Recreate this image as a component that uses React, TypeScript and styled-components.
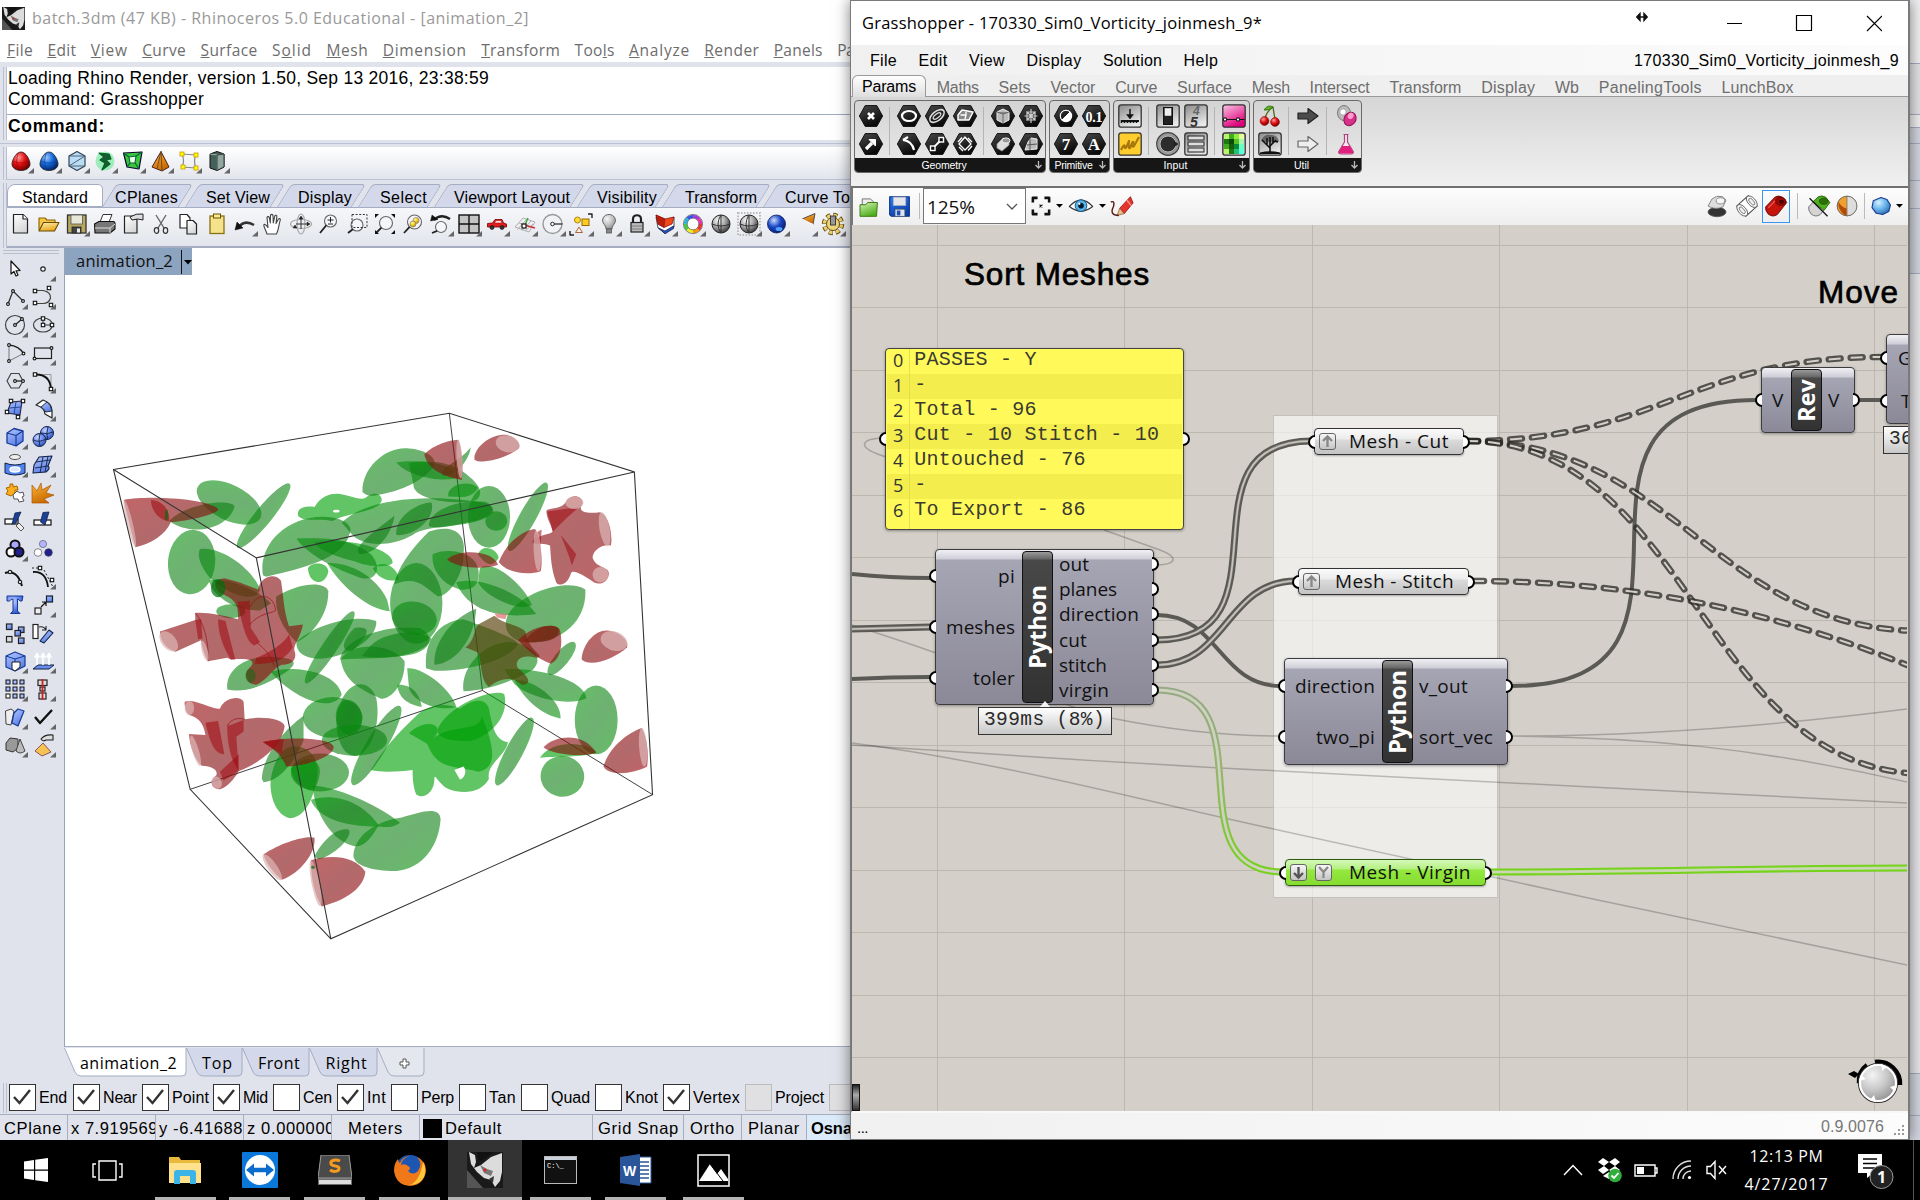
import React, { useLayoutEffect, useRef, useState } from "react";
import styled, { createGlobalStyle, css } from "styled-components";

const SANS = '"Liberation Sans", Arial, sans-serif';
const UI = '"Open Sans", "Noto Sans", sans-serif';
const MONO = '"Liberation Mono", "Courier New", monospace';

const GlobalStyle = createGlobalStyle`
  *, *::before, *::after { box-sizing: border-box; }
  body { margin: 0; background: #000; overflow: hidden; }
  svg { display: block; flex: none; }
`;

/* ---------- text that spreads its letters over a given width ---------- */

const Label = styled.span<{ $size: number; $font: string; $color: string; $bold?: boolean }>`
  display: inline-block;
  flex: none;
  white-space: pre;
  line-height: 1;
  font-family: ${(p) => p.$font};
  font-size: ${(p) => p.$size}px;
  font-weight: ${(p) => (p.$bold ? 700 : 400)};
  color: ${(p) => p.$color};
`;

type FitProps = { text: string; w?: number; size?: number; font?: string; color?: string; bold?: boolean; mnemonic?: number };

function Fit({ text, w, size = 16, font = SANS, color = "#000", bold, mnemonic }: FitProps) {
  const ref = useRef<HTMLSpanElement>(null);
  const [spacing, setSpacing] = useState(0);
  useLayoutEffect(() => {
    if (ref.current && w) setSpacing((w - ref.current.getBoundingClientRect().width) / text.length);
  }, []);
  return (
    <Label ref={ref} $size={size} $font={font} $color={color} $bold={bold} style={{ letterSpacing: spacing }}>
      {mnemonic === undefined ? text : (
        <>{mnemonic > 0 && text.slice(0, mnemonic)}<u>{text[mnemonic]}</u>{text.slice(mnemonic + 1)}</>
      )}
    </Label>
  );
}

/* ---------- drawing helpers ---------- */

const p = (d: string, fill = "none", stroke = "#222", w = 1.2) => (
  <path d={d} fill={fill} stroke={stroke} strokeWidth={w} strokeLinejoin="round" />
);
const c = (x: number, y: number, r: number, fill = "none", stroke = "#222", w = 1.2) => (
  <circle cx={x} cy={y} r={r} fill={fill} stroke={stroke} strokeWidth={w} />
);
const e = (x: number, y: number, rx: number, ry: number, fill = "none", stroke = "#222", w = 1.2) => (
  <ellipse cx={x} cy={y} rx={rx} ry={ry} fill={fill} stroke={stroke} strokeWidth={w} />
);
const r = (x: number, y: number, w: number, h: number, fill = "none", stroke = "#222", sw = 1.2) => (
  <rect x={x} y={y} width={w} height={h} fill={fill} stroke={stroke} strokeWidth={sw} />
);

function Glyph({ children, corner, size = 28 }: { children?: React.ReactNode; corner?: boolean; size?: number }) {
  return (
    <svg width={size} height={size} viewBox="0 0 28 28">
      {children}
      {corner && <path d="M27 21V26.5H21Z" fill="#666" />}
    </svg>
  );
}

const Defs = styled.svg`
  position: absolute;
  width: 0;
  height: 0;
`;

const Gradients = () => (
  <Defs>
    <defs>
      {[
        ["red", "#ff9a9a", "#e01010", "#6a0000"],
        ["blue", "#9cc8ff", "#1266d8", "#04205f"],
        ["ball", "#c8dcff", "#1a46c4", "#061a66"],
        ["grey", "#ffffff", "#a8a8a8", "#333333"],
        ["yel", "#fff6b0", "#f0d020", "#b08a00"],
        ["sky", "#d6f0ff", "#6cb8ee", "#2a6bb0"],
        ["dial", "#f4f4f4", "#c8c8c8", "#8c8c8c"],
        ["peri", "#c6d2ff", "#6f8ff0", "#2a4fc0"],
      ].map(([id, a, b, d]) => (
        <radialGradient key={id} id={id} cx=".36" cy=".3" r=".75">
          <stop offset="0" stopColor={a} />
          <stop offset=".5" stopColor={b} />
          <stop offset="1" stopColor={d} />
        </radialGradient>
      ))}
      {[
        ["folder", "#fff2b8", "#e8a81c"],
        ["orange", "#ffb43a", "#c76a00"],
        ["paper", "#ffffff", "#d8d8d8"],
        ["steel", "#4a4a4a", "#080808"],
        ["tile", "#8a8a8a", "#e8e8e8"],
        ["pblue", "#b4c6ff", "#5b7fe4"],
        ["lime", "#d4f5b8", "#4fae1c"],
        ["save", "#2a7cf0", "#0a3fae"],
        ["pink", "#f8c6e4", "#e0007a"],
      ].map(([id, a, b]) => (
        <linearGradient key={id} id={id} x1="0" y1="0" x2="0.5" y2="1">
          <stop offset="0" stopColor={a} />
          <stop offset="1" stopColor={b} />
        </linearGradient>
      ))}
      <linearGradient id="leaf" x1="0" y1="0" x2="1" y2="1">
        <stop offset="0" stopColor="rgb(0,148,6)" />
        <stop offset=".5" stopColor="rgb(14,124,20)" />
        <stop offset="1" stopColor="rgb(0,144,4)" />
      </linearGradient>
      <linearGradient id="meat" x1="0" y1="0" x2="1" y2="1">
        <stop offset="0" stopColor="rgb(156,8,12)" />
        <stop offset=".5" stopColor="rgb(130,14,16)" />
        <stop offset="1" stopColor="rgb(154,4,10)" />
      </linearGradient>
      <linearGradient id="wireFade" x1="0" y1="0" x2="0" y2="1">
        <stop offset="0" stopColor="#98a888" />
        <stop offset=".45" stopColor="#94b56c" />
        <stop offset="1" stopColor="#76d21c" />
      </linearGradient>
    </defs>
  </Defs>
);

/* ---------- Rhino icons ---------- */

const egg = (fill: string) => p("M14 5C19 5 23 13 23 17C23 21 19 23.5 14 23.5S5 21 5 17C5 13 9 5 14 5Z", fill, "#222", 0.8);
const renderIcons: React.ReactNode[] = [
  <>{egg("url(#red)")}{p("M6 14Q14 18 22 14M11 6Q8 14 11 23", "none", "#a00", 0.6)}</>,
  <>{egg("url(#blue)")}{p("M6 14Q14 18 22 14M11 6Q8 14 11 23", "none", "#0a3c90", 0.6)}</>,
  <>{p("M14 4.5L22 9V19L14 23.5L6 19V9Z", "#b8dcf4", "#345", 1.2)}{p("M6 9H22M6 19H22M6 19L22 9", "none", "#456", 0.9)}</>,
  <><circle cx="14" cy="14" r="9.5" fill="#5be88a" opacity=".55" />{p("M8 6L18 7L20 12L15 13L19 17L11 23L14 16L9 13L13 10Z", "#1b5a35", "#062", 1.2)}</>,
  <>{p("M4.5 6L23 5L20 22L8 20Z", "#39c53c", "#103", 1.2)}{p("M10 10L17 9L16 16L11 16Z", "#e8ffe8", "#063", 1.1)}{p("M4.5 6L10 10M23 5L17 9M20 22L16 16M8 20L11 16", "none", "#063")}</>,
  <>{p("M14 4.5L22 20L15 24L5 20Z", "url(#orange)", "#422", 1)}{p("M14 4.5L15 24M14 4.5L10 22", "none", "#642", 0.9)}</>,
  <>{p("M7 7L21 8Q18 14 21 21L7 20Q10 14 7 7Z", "none", "#888", 1.2)}{r(5, 5, 4, 4, "#ff0", "#c90", 0.8)}{r(19, 6, 4, 4, "#ff0", "#c90", 0.8)}{r(19, 19, 4, 4, "#ff0", "#c90", 0.8)}{r(6, 18, 4, 4, "#ff0", "#c90", 0.8)}</>,
  <>{p("M7 7L14 4.5L21 7V20L14 23.5L7 21Z", "#456058", "#111", 1)}{p("M14 8V23.5M7 7L14 8L21 7", "none", "#9cb4ac", 1)}{p("M14 8L21 7V20L14 23.5Z", "#8fa8a0", "#222", 0.8)}</>,
];

const magnifier = (x: number, y: number, rad: number) => (
  <>{c(x, y, rad, "#f4f6fa", "#666", 1.1)}{p(`M${x - rad * 0.7} ${y + rad * 0.7}L5 23`, "none", "#222", 1.8)}</>
);
const globe = (
  <>{c(14, 14, 9, "url(#grey)", "#222", 1)}{p("M5 14Q14 18 23 14M14 5V23M14 5Q8 14 14 23", "none", "#333", 1)}</>
);

const standardIcons: [React.ReactNode, boolean?][] = [
  [<>{p("M6.5 4.5H16L20.5 9V23H6.5Z", "url(#paper)", "#222", 1.2)}{p("M16 4.5V9H20.5", "#fff")}</>],
  [<>{p("M4 20V8H10L12 10H20V13", "#f4c64a", "#8a6200", 1.1)}{p("M4 21L8.5 12.5H24L19.5 21Z", "url(#folder)", "#6a4a00", 1.1)}</>],
  [<>{r(4.5, 5, 18.5, 18, "#b8a860", "#333", 1.3)}{r(8, 5, 11.5, 9, "#e8e8d8", "#555", 0.8)}{r(9, 17, 9, 6, "#444", "#222", 0.8)}{r(14, 18.5, 3, 4, "#eee", "none", 0)}</>, true],
  [<>{p("M9 12L12 4.5H21L18 12Z", "#fff", "#333", 1)}{p("M3.5 14L8 11.5H23L24 13V19L19 23H4Z", "#777", "#111", 1.1)}{p("M4 18H19L24 14M19 18V23", "none", "#ddd", 1)}</>],
  [<>{p("M5.5 6H14L18 10V23H5.5Z", "url(#paper)", "#222", 1.2)}{p("M11 7Q17 3 24 4V10Q19 8 13 10Z", "#ddd", "#222", 1)}</>],
  [<>{p("M9 5L17 18M19 5L11 18", "none", "#666", 1.4)}{e(9.5, 20.5, 2.2, 2.8, "none", "#333")}{e(18.5, 20.5, 2.2, 2.8, "none", "#333")}</>],
  [<>{p("M5 4.5H12L15 8V18H5Z", "#fff", "#222", 1.2)}{p("M12 10.5H18L21.5 14V24H12Z", "url(#paper)", "#222", 1.2)}</>],
  [<>{r(7, 6, 14, 17.5, "#f4e28c", "#8a7010", 1.3)}{r(10.5, 4, 7, 4, "#ffe890", "#665500", 1)}</>],
  [<>{p("M7 18Q13 9 23 15", "none", "#333", 2.6)}{p("M4 20L6 12L12 18Z", "#111", "#111", 0.5)}</>, true],
  [<>{p("M8 24C7 20 4 16 5 14.5C6.5 13.5 8.5 17 9 17.5L8 7.5C8.5 6 10 6.5 10.4 8L11.3 13L11.5 5.5C12 4 13.8 4 14 5.6L14.3 13L15.8 6C16.4 4.6 18 5.2 17.8 7L17 13.5L19.5 9C20.4 8 21.8 9 21.2 10.4C19.6 15 20 19 17.5 24Z", "#fff", "#444", 1.1)}</>],
  [<>{e(14, 14, 10.5, 4.5, "none", "#aaa", 1.2)}{e(14, 14, 4, 10, "none", "#aaa", 1.2)}{p("M14 9V19M9 14H21", "none", "#333", 1)}{p("M12 9L14 6L16 9ZM20 12L23 14L20 16ZM8 15L6 18L10 18Z", "#222", "#222", 0.5)}</>],
  [<>{magnifier(15.5, 11, 6)}{p("M12.5 10H18.5M15.5 7V12.5M13 14H18", "none", "#222", 1)}</>],
  [<>{magnifier(14, 15, 6)}<rect x="9" y="4.5" width="15" height="13" fill="none" stroke="#333" strokeDasharray="2 1.6" /></>],
  [<>{magnifier(15, 13, 6.5)}{p("M4 4H8L4 8ZM24 4H20L24 8ZM4 24V20L8 24ZM24 24H20L24 20Z", "#111", "none", 0)}</>],
  [<>{magnifier(15.5, 12, 7)}{c(17, 10.5, 3, "url(#yel)", "#987", 0.8)}{c(14, 14, 3, "url(#yel)", "#987", 0.8)}</>],
  [<>{magnifier(14, 17, 5.5)}{p("M7 10Q14 3 23 9", "none", "#222", 2.4)}{p("M3.5 11L5 5L11 9.5Z", "#111", "#111", 0.4)}</>, true],
  [<>{r(4, 5, 20, 18, "#c4c4c4", "#111", 1.4)}{p("M14 5V23M4 14H24", "none", "#111", 1.4)}</>, true],
  [<>{p("M4.5 17V13.5L9.5 13L12 9.5H19L20.5 13L23.5 14V17Z", "#e02020", "#700", 0.8)}{p("M13 10.5H18L19 13H11.5Z", "#fdd", "#a00", 0.5)}{c(9, 17.5, 2, "#333", "#111", 0.6)}{c(19, 17.5, 2, "#333", "#111", 0.6)}</>, true],
  [<>{p("M4 17L12 8L24 12L18 22ZM8 13L21 17M6.5 19.5L16 8.8M11 20.5L20 11M14 21L22 14", "none", "#b0b0b0", 1)}{p("M13 15L24 18", "none", "#c33", 1.4)}{p("M14 15L17 8", "none", "#3a3", 1.4)}{r(11, 14, 4, 4, "#fff", "#111", 1.2)}</>, true],
  [<>{c(13.5, 14, 9.5, "#f0f2f6", "#999", 1.4)}{p("M13.5 14H23.5", "none", "#222", 1.2)}{c(13.5, 14, 1.8, "#fff", "#222", 1)}</>, true],
  [<>{c(10.5, 10, 3, "#fd3", "#a70", 0.9)}{r(15, 9, 7, 6.5, "#fc2", "#960", 1)}{p("M12 17L15.5 22.5H8.5Z", "#fed", "#a64", 1)}{p("M21 4H25V8M3 21V25H7", "none", "#222", 1.4)}</>, true],
  [<>{p("M14 4.5C19 4.5 21.5 9 20 12.5C18.5 15 17 16.5 17 19H11C11 16.5 9.5 15 8 12.5C6.5 9 9 4.5 14 4.5Z", "url(#dial)", "#666", 1)}{r(11.5, 19, 5, 4, "#888", "#555", 0.8)}</>, true],
  [<>{p("M10 13V9C10 4 18 4 18 9V13", "none", "#222", 2.2)}{r(8, 12.5, 12, 9.5, "#bbb", "#222", 1.2)}{p("M9 16H19M9 19H19", "none", "#777", 0.9)}</>, true],
  [<>{p("M5 7L14 12L23 7V17L14 23L7 18Z", "#fff", "#345", 0.9)}{p("M5 5L14 9L23 7L21 14L13 17.5L7 14Z", "#f04a1c", "#811", 0.8)}{p("M5 5L14 9L13 17.5L7 14Z", "#b8200c", "#811", 0.5)}{p("M7.5 18L14 21L22.5 16V18.5L14 23.8Z", "#2a52c8", "#124", 0.8)}</>, true],
  [<>
    {["#e33", "#f90", "#ee2", "#4c4", "#2bd", "#35e", "#a3d", "#e3a"].map((col, i) => (
      <circle key={col} cx="14" cy="14" r="7.6" fill="none" stroke={col} strokeWidth="3.4" strokeDasharray="6.1 41.7" strokeDashoffset={-i * 5.97} />
    ))}
    {c(14, 14, 9.6, "none", "#555", 0.7)}{c(14, 14, 5.8, "#fff", "#555", 0.7)}
  </>, true],
  [globe],
  [<><rect x="3" y="3" width="22" height="22" fill="none" stroke="#bbb" strokeWidth="2" strokeDasharray="1.5 1.5" />{globe}</>, true],
  [<>{c(13.5, 14, 9, "url(#ball)", "#0a1c60", 0.8)}{e(16, 19, 3.5, 2, "#4fa0ff", "none", 0)}</>, true],
  [<>{p("M11 9L24 3.5L22 14.5Z", "url(#orange)", "#444", 0.9)}{p("M11 9Q18 13 22 14.5", "none", "#fff", 1.4)}</>, true],
  [<>
    <circle cx="14" cy="14" r="8.6" fill="none" stroke="#6a5210" strokeWidth="5.2" strokeDasharray="4 2.75" />
    <circle cx="14" cy="14" r="8.4" fill="none" stroke="#e8cf70" strokeWidth="3.6" strokeDasharray="3.2 3.4" strokeDashoffset="-.4" />
    {c(14, 14, 6.5, "#ecd57c", "#6a5210", 1)}{r(11.5, 6, 5, 9, "#999", "#333", 0.9)}
  </>, true],
];

const node = (x: number, y: number) => c(x, y, 1.4, "#fff", "#111", 1.1);
const handle = (x: number, y: number) => r(x - 1.7, y - 1.7, 3.4, 3.4, "#fff", "#111", 1.1);
const B = "url(#pblue)";
const sideIcons: [React.ReactNode, boolean?][] = [
  [<>{p("M10 6L10 19L13 16.5L15 21L17 20L15 15.8L19 15.5Z", "#fff", "#111", 1.2)}</>],
  [<>{c(14, 14, 2.2, "#fff", "#222", 1.2)}</>, true],
  [<>{p("M7 21L12 8L22 18", "none", "#333", 1.3)}{node(7, 21)}{node(12, 8)}{node(22, 18)}</>, true],
  [<>{p("M6 7.5H14Q22 9 21.5 15Q20 20.5 14 20.5H6", "none", "#444", 1.2)}{handle(6, 8)}{handle(6, 20)}{handle(20, 5)}{handle(22, 22)}</>, true],
  [<>{c(14, 14, 9.5, "none", "#444", 1.2)}{p("M14 14L21 8", "none", "#222", 1.2)}{node(14, 14)}{node(21, 8)}</>, true],
  [<>{e(14, 14, 9.5, 7, "none", "#444", 1.2)}{p("M14 7V14H23", "none", "#333", 1)}{handle(14, 7.5)}{handle(14, 14)}{handle(23, 14)}</>, true],
  [<>{p("M8 6Q18 7 22.5 14.5", "none", "#222", 1.4)}{p("M8 6V22L22.5 14.5", "none", "#777", 1)}{node(8, 6)}{node(22.5, 14.5)}{node(8, 22)}</>, true],
  [<>{r(5.5, 9, 17, 10.5, "none", "#222", 1.2)}{node(22.5, 9)}{node(5.5, 19.5)}</>, true],
  [<>{p("M10 6.5H18L22 14L18 21H10L6 14Z", "none", "#444", 1.2)}{p("M14 14H22", "none", "#111", 1.2)}{node(14, 14)}{node(22, 14)}</>, true],
  [<>{p("M6 7.5H22V22", "none", "#999", 1)}{p("M6 7.5Q21 7 22 22", "none", "#111", 1.8)}{handle(6, 7.5)}{handle(22, 22)}</>, true],
  [<>{p("M10 7L21 6L19 20L6 18Z", B, "#224", 1.1)}{p("M8 13L20 12M15 7L13 19", "none", "#234a9a", 1)}{handle(10, 6)}{handle(22, 6)}{handle(6, 17)}{handle(17, 22)}</>, true],
  [<>{p("M7 10L14 5Q23 8 23 16V23L16 19Q16 13 7 10Z", "#fff", "#222", 1.2)}{p("M12 12L18 7Q22 10 23 16L17 17Q15 14 12 12Z", B, "#234", 1)}</>, true],
  [<>{p("M6 10L13 5.5L22 8V18L15 23L6 20Z", B, "#123a9a", 1.3)}{p("M6 10L15 12.5L22 8M15 12.5V23", "none", "#123a9a", 1.1)}</>, true],
  [<>{c(18, 10, 6.5, "url(#peri)", "#124", 1)}{c(10.5, 17, 6.5, "url(#peri)", "#124", 1)}{p("M4.5 17Q10 20 17 16M11 10.5Q9 17 11 23.5M12 10Q18 12 24 9M19 4Q17 10 18.5 16", "none", "#124", 0.9)}</>, true],
  [<>{e(14, 6, 5.5, 2.5, "#eee", "#555", 1)}{p("M4 12Q14 16 24 12V22Q14 26 4 22Z", "#4f82ee", "#124", 1)}{e(14, 18.5, 5, 2.6, "#dce6ff", "#fff", 1.4)}</>, true],
  [<>{p("M5 14L10 6L23 5L19 15Q22 17 17 21L4 22Z", B, "#124", 1.1)}{p("M7 11L21 9M6 17L19 15M14 6L11 22M19 5L16 21", "none", "#124", 0.9)}</>, true],
  [<>{p("M5 9L9 8V5H12V8L16 7L17 11H14V14L10 17L5 15L7 12Z", "#ffae1c", "#a60", 1)}{p("M12 16L16 12L19 14L22 13L23 17L21 18L23 22L18 23L17 20L13 20Z", "#fff", "#555", 1)}</>],
  [<>{p("M3 24L3 6L8 12L12 4L13 11L22 6L17 14L25 16L15 20L20 24Z", "url(#orange)", "#a50", 0.7)}</>],
  [<>{r(4, 12, 13, 5, "#fff", "#111", 1.2)}{p("M14 6L20 5L15 16L11 17Z", "#1c3f98", "#124", 0.8)}{p("M15 19L18 16L23 21L20 24Z", "#eee", "#555", 1)}</>],
  [<>{r(5, 13, 17, 5, "#fff", "#111", 1.2)}{p("M14 5.5L20 5L16 18L11.5 15Z", "#1c3f98", "#124", 0.8)}</>],
  [<>{c(14, 10, 4.5, "#a9a8ff", "#111", 2)}{c(10, 17, 4.5, "#fff", "#111", 2)}{c(18, 17, 4.5, "#221f88", "#111", 2)}</>, true],
  [<>{c(14, 9, 3.6, "#b6b4ff", "#667", 0.8)}{c(9, 17.5, 3.8, "#fff", "#667", 0.8)}{c(19.5, 17.5, 3.8, "#221f88", "#446", 0.8)}</>],
  [<>{p("M4 10Q16 6 21 23", "none", "#111", 2)}{c(9, 9, 1.7, "#fff")}{c(19, 19, 1.7, "#fff")}</>],
  [<><path d="M3 5H13M15 7L24 24" stroke="#222" strokeDasharray="2 2" fill="none" />{p("M4 9Q17 8 19 24", "none", "#111", 1.8)}{handle(11, 5)}{handle(23, 17)}</>, true],
  [<>{p("M6 5H22L21 10H19Q18 8 16.5 8V20L19 22.5H9.5L12 20V8Q10 8 8.5 10H6Z", "url(#peri)", "#123a9a", 1)}</>],
  [<>{r(17.5, 5, 6, 6, B, "#123", 1.2)}{r(6, 17, 6, 6, "#eee", "#222", 1.2)}{p("M12 16L17 11M13 11H17V15", "none", "#111", 1.2)}</>, true],
  [<>{r(5.5, 5, 5.5, 5.5, B)}{r(5.5, 17.5, 5.5, 5.5, "#ddd")}{r(17.5, 8, 5.5, 5.5, B)}{r(14, 11.5, 5.5, 5.5, B)}{r(17.5, 19, 5.5, 5.5, B)}</>],
  [<>{r(4, 5.5, 5, 14, "#fff", "#222", 1.2)}{p("M11 22L20 11L24 14L15 24Z", B, "#124", 1.1)}{p("M10 8Q15 7 17 11M17 7V11H13", "none", "#222", 1.1)}</>],
  [<>{p("M5 9L14 5L24 9V19L14 24L5 20Z", B, "#123a9a", 1.2)}{p("M5 9L14 12L24 9M14 12V16", "none", "#123a9a", 1)}{p("M11 15L19 15V20L14 24L11 22Z", "#fff", "#222", 1)}</>, true],
  [<>{p("M4 22L9 18H25L20 22Z", "#6a8cee", "#124", 1)}{p("M8 18V9M14 18V9M20 18V9M6 10L8 6.5L10 10ZM12 10L14 6.5L16 10ZM18 10L20 6.5L22 10Z", "#fff", "#fff", 1.6)}</>, true],
  [<>{[5, 12, 19].map((y) => [5, 12, 19].map((x) => <rect key={`${x}-${y}`} x={x} y={y} width="4" height="4" fill={x + y > 23 && x < 12 ? "#fff" : "#a9bcff"} stroke="#111" />))}</>, true],
  [<>{r(9, 5, 9, 5.5, "#ddd")}{r(11, 12, 5, 4, "#ddd")}{r(10, 18, 7, 6, "#ddd")}{p("M13.5 4V25", "none", "#c22", 1.8)}</>, true],
  [<>{p("M4.5 8L10 6L13 8L10 22L5 21Z", "#eee", "#444", 1)}{p("M13 10L17 6L23 8L17 23L11 20Z", B, "#123a9a", 1.2)}</>, true],
  [<>{p("M6 14L11 20L23 7", "none", "#111", 2.4)}</>, true],
  [<>{p("M5 12L9 7L17 8V17L12 21L5 19Z", "#999", "#333", 1)}{p("M19 8L24 20Q19 24 15 20Z", "#bbb", "#444", 1)}</>, true],
  [<>{p("M14 12L22 21L13 25L6 20Z", "#f6c352", "#855", 1)}{p("M12 8Q16 3 24 4V9L17 9Q14 11 12 8Z", "#ddd", "#222", 1.1)}</>, true],
];

/* ---------- Rhino window ---------- */

const Screen = styled.div`
  width: 1920px;
  height: 1200px;
  display: flex;
  flex-direction: column;
  overflow: hidden;
`;
const Desktop = styled.div`
  height: 1140px;
  display: flex;
`;
const Rhino = styled.div`
  width: 850px;
  height: 1140px;
  display: flex;
  flex-direction: column;
  overflow: hidden;
  background: #e0e3eb;
`;
const TitleBar = styled.div`
  height: 36px;
  flex: none;
  display: flex;
  align-items: center;
  gap: 7px;
  padding-left: 2px;
  background: #fff;
`;
const RhinoMenu = styled.div`
  height: 26px;
  flex: none;
  display: flex;
  align-items: center;
  gap: 14.4px;
  padding: 3px 0 0 7px;
  background: #fff;
`;
const grip = css`
  &::before {
    content: "";
    flex: none;
    width: 4px;
    border: 1px solid #b9bfcd;
    border-width: 0 1px;
  }
`;
const CommandDock = styled.div`
  height: 82px;
  flex: none;
  display: flex;
  padding: 5px 0 3px 3px;
  border-bottom: 1px solid #bcc3d4;
  ${grip}
`;
const CommandPane = styled.div`
  flex: 1;
  display: flex;
  flex-direction: column;
  background: #fff;
`;
const History = styled.div`
  height: 48px;
  display: flex;
  flex-direction: column;
  align-items: flex-start;
  gap: 3px;
  padding: 3px 0 0 1px;
  border-bottom: 1px solid #a0abbf;
`;
const Prompt = styled.div`
  flex: 1;
  display: flex;
  align-items: center;
  padding: 0 0 2px 1px;
`;
const Dock = styled.div<{ $h: number }>`
  height: ${(q) => q.$h}px;
  flex: none;
  display: flex;
  padding: 3px 0 0 3px;
  ${grip}
`;
const RenderBar = styled.div`
  flex: 1;
  display: flex;
  align-items: center;
  padding-bottom: 4px;
  background: linear-gradient(#fff, #e2e5ec);
  border-bottom: 1px solid #bcc3d4;
`;
const TabbedBar = styled.div`
  flex: 1;
  display: flex;
  flex-direction: column;
  padding-top: 1px;
  border-bottom: 2px solid #a5adc2;
`;
const ToolTabs = styled.div`
  height: 24px;
  flex: none;
  display: flex;
  overflow: hidden;
  border-bottom: 1px solid #a5adc2;
`;
const ToolTab = styled.div<{ $w: number; $active?: boolean; $pad: number }>`
  position: relative;
  z-index: 0;
  width: ${(q) => q.$w}px;
  flex: none;
  padding: ${(q) => (q.$active ? 4 : 5)}px 0 0 ${(q) => q.$pad}px;
  background: ${(q) => (q.$active ? "#fff" : "transparent")};
  border-radius: ${(q) => (q.$active ? "8px 5px 0 0" : "0")};
  border: ${(q) => (q.$active ? "1px solid #a5adc2" : "none")};
  ${(q) => !q.$active && css`
    &::before {
      content: "";
      position: absolute;
      z-index: -1;
      inset: 0 0 0 6px;
      background: #d3d8ea;
      border: 1px solid #a5adc2;
      border-bottom: none;
      border-radius: 4px 4px 0 0;
      transform: skewX(-32deg);
    }
  `}
`;
const ToolRow = styled.div`
  flex: 1;
  display: flex;
  align-items: flex-start;
  padding-top: 2px;
  overflow: hidden;
  background: linear-gradient(#f6f7f9, #e2e5ec);
`;
const Work = styled.div`
  height: 799px;
  flex: none;
  display: flex;
`;
const SidePanel = styled.div`
  width: 64px;
  flex: none;
  padding: 2px 5px 0 1px;
`;
const SideGrip = styled.div`
  height: 4px;
  margin: 0 0 1px 2px;
  border: 1px solid #b9bfcd;
  border-width: 1px 0;
`;
const SideGrid = styled.div`
  display: grid;
  grid-template-columns: 28px 28px;
  grid-auto-rows: 28px;
`;
const Viewport = styled.div`
  flex: 1;
  display: flex;
  flex-direction: column;
  align-items: flex-start;
  background: #fff;
  border-left: 1px solid #99a3b8;
  border-bottom: 1px solid #a5adc2;
`;
const ViewTag = styled.div`
  width: 127px;
  height: 27px;
  display: flex;
  align-items: center;
  padding-left: 11px;
  gap: 8px;
  background: #8ca4c0;
`;
const Scene = styled.div`
  padding: 125px 0 0 35px;
`;
const ViewTabs = styled.div`
  height: 34px;
  flex: none;
  display: flex;
  padding: 1px 0 0 64px;
`;
const ViewTab = styled.div<{ $w: number }>`
  width: ${(q) => q.$w}px;
  height: 29px;
  display: grid;
  > * { grid-area: 1 / 1; }
  > span { align-self: center; justify-self: center; padding: 2px 0 0 6px; }
`;
const OsnapBar = styled.div`
  height: 34px;
  flex: none;
  display: flex;
  align-items: center;
  padding-left: 3px;
  overflow: hidden;
  border-bottom: 1px solid #a5adc2;
  &::before {
    content: "";
    flex: none;
    width: 4px;
    height: 30px;
    margin-right: 2px;
    border: 1px solid #b9bfcd;
    border-width: 0 1px;
  }
`;
const Osnap = styled.div<{ $w: number }>`
  width: ${(q) => q.$w}px;
  flex: none;
  display: flex;
  align-items: center;
  gap: 3px;
`;
const Box = styled.div<{ $off?: boolean }>`
  width: 27px;
  height: 27px;
  flex: none;
  border: ${(q) => (q.$off ? "1px solid #bbb" : "1.5px solid #333")};
  background: ${(q) => (q.$off ? "#e0e0e2" : "#fff")};
`;
const StatusBar = styled.div`
  flex: 1;
  display: flex;
`;
const StatusCell = styled.div<{ $w: number; $pad: number; $on?: boolean }>`
  width: ${(q) => q.$w}px;
  flex: none;
  display: flex;
  align-items: center;
  gap: 3px;
  overflow: hidden;
  padding: 2px 0 0 ${(q) => q.$pad}px;
  border-right: 1px solid #a5adc2;
  background: ${(q) => (q.$on ? "#dcebf9" : "transparent")};
`;
const Swatch = styled.div`
  width: 19px;
  height: 19px;
  background: #000;
`;

const menuItems: [string, number, number][] = [
  ["File", 26, 0], ["Edit", 29, 0], ["View", 37, 0], ["Curve", 44, 0], ["Surface", 57, 0], ["Solid", 40, 1], ["Mesh", 42, 0],
  ["Dimension", 84, 0], ["Transform", 79, 0], ["Tools", 40, 3], ["Analyze", 61, 0], ["Render", 55, 0], ["Panels", 49, 0], ["Pa", 17, 9],
];
const toolTabs: [string, number, number, number][] = [
  ["Standard", 96, 66, 14], ["CPlanes", 83, 63, 12], ["Set View", 92, 64, 20], ["Display", 81, 54, 20], ["Select", 76, 47, 21],
  ["Viewport Layout", 143, 116, 19], ["Visibility", 85, 60, 19], ["Transform", 101, 72, 22], ["Curve To", 120, 65, 21],
];
const osnaps: [string, number, number, boolean, boolean?][] = [
  ["End", 64, 28, true], ["Near", 69, 34, true], ["Point", 71, 37, true], ["Mid", 60, 25, true], ["Cen", 64, 29, false], ["Int", 54, 19, true],
  ["Perp", 68, 33, false], ["Tan", 62, 27, false], ["Quad", 74, 39, false], ["Knot", 68, 33, false], ["Vertex", 82, 47, true], ["Project", 84, 49, false, true], ["", 84, 0, false, true],
];

/* closed outlines of the simulated bodies */
const greens = [
  "M722 262C720 190 790 130 850 138C900 142 925 165 920 185C905 215 850 250 800 262C760 272 740 280 722 262Z",
  "M850 180C900 170 960 175 1000 205C1040 235 1060 265 1035 285C1000 300 860 290 862 240Z",
  "M815 178C870 168 985 180 985 222C940 235 850 220 815 178Z",
  "M1020 135C1015 175 975 222 942 215C935 190 985 180 1020 135Z",
  "M190 345C240 290 370 280 370 305C350 370 250 390 190 345Z",
  "M275 425C330 415 420 480 440 540C430 590 320 540 290 490C272 460 268 440 275 425Z",
  "M300 515C330 500 440 540 470 580L440 600C370 600 310 560 300 515Z",
  "M447 490C440 400 530 320 640 335C690 345 695 370 685 385C670 450 560 480 460 503C450 503 447 500 447 490Z",
  "M540 395C640 390 700 400 745 440C780 480 760 530 700 500C640 480 560 430 540 395Z",
  "M625 465C680 460 760 500 790 570L797 602C740 600 660 530 625 465Z",
  "M665 350C720 290 860 270 1000 285C1060 290 1085 300 1082 320C1040 370 900 350 860 385C800 420 720 420 690 380Z",
  "M815 385C810 330 880 290 912 292C925 340 860 390 815 385Z",
  "M905 360C900 320 980 280 1060 290C1095 305 1080 330 1030 345C980 355 940 370 905 360Z",
  "M810 330C805 380 760 440 715 440C690 420 760 370 810 330Z",
  "M905 375C960 355 1010 370 1000 440C1000 500 960 560 930 560C890 530 870 500 810 525C820 470 870 410 905 375Z",
  "M915 440C950 420 1030 430 1040 480C1050 530 1020 545 990 540C950 530 910 490 915 440Z",
  "M1045 480C1080 450 1170 530 1188 585C1150 605 1060 560 1040 520Z",
  "M980 520C1040 500 1160 550 1200 610C1100 625 1010 600 980 520Z",
  "M1130 600C1180 540 1290 510 1335 540C1340 620 1280 690 1180 692C1120 690 1100 640 1130 600Z",
  "M485 560C560 515 620 520 628 545C630 620 570 680 540 690C500 650 480 600 485 560Z",
  "M540 690C590 640 700 610 760 630C765 680 680 735 600 738C560 735 540 720 540 690Z",
  "M660 740C670 680 780 640 880 650C920 670 915 710 860 725C790 740 720 735 660 740Z",
  "M662 740C690 690 800 690 838 745C840 820 790 860 770 850C700 820 670 790 662 740Z",
  "M745 700C780 660 880 650 912 680C900 720 800 745 720 730Z",
  "M897 765C890 690 930 630 1000 625C1040 640 1150 680 1150 695C1130 740 1010 775 920 772Z",
  "M920 755C915 690 970 620 1035 595C1030 680 980 750 920 755Z",
  "M350 825C345 770 400 720 500 735C550 740 540 760 490 790C440 820 390 835 350 825Z",
  "M470 775C520 755 650 770 665 840C630 900 520 840 470 775Z",
  "M1000 830C990 770 1050 690 1130 690C1200 700 1220 740 1190 770C1140 800 1060 830 1000 830Z",
  "M1112 768C1180 760 1330 790 1338 850C1290 875 1180 850 1140 810Z",
  "M1140 800C1180 790 1270 850 1267 908C1220 900 1170 860 1140 800Z",
  "M845 765C890 760 970 830 980 875C930 890 860 860 850 820Z",
  "M818 812C860 810 880 840 885 875C850 870 820 850 818 812Z",
  "M660 870C680 800 740 790 760 850C775 930 740 1015 700 1015C650 1010 640 900 660 870Z",
  "M585 1100C640 1100 760 1150 825 1205C800 1225 770 1215 765 1215C740 1260 720 1275 700 1272C640 1260 590 1180 585 1100Z",
  "M580 1140C640 1120 720 1140 768 1215C700 1220 600 1200 580 1140Z",
  "M697 1300C700 1240 760 1200 830 1190C880 1175 935 1155 937 1195C930 1290 870 1345 800 1343C740 1340 700 1325 697 1300Z",
  "M590 1300C610 1260 650 1215 685 1225C695 1250 640 1300 600 1310Z",
  "M445 1080C450 1000 520 930 560 900L560 970C540 1020 500 1085 450 1090Z",
  "M695 715C720 690 765 640 700 650C670 680 655 720 695 715Z",
];
const greenOvals: number[][] = [
  [1070, 333, 58, 88, 0], [1177, 333, 110, 23, -62], [355, 292, 97, 50, 28], [450, 330, 116, 24, -52], [252, 462, 65, 92, 5],
  [870, 580, 72, 115, 0], [865, 622, 62, 47, 12], [632, 705, 122, 21, -57], [1270, 737, 58, 20, -52], [1365, 912, 59, 98, 0],
  [640, 905, 82, 58, 0], [760, 985, 130, 28, -60], [1140, 1002, 108, 24, -63], [605, 1062, 80, 54, 0], [1272, 1073, 60, 58, 10],
  [685, 905, 36, 50, -8], [360, 602, 40, 20, 0], [700, 970, 90, 44, 0], [1090, 345, 30, 28, 0],
];
const brights = [
  "M545 330C540 310 560 300 590 305C610 270 640 265 660 268C700 275 720 290 735 275C750 262 775 265 775 285C770 320 680 320 640 345C600 335 560 350 545 330Z",
  "M590 405C700 390 810 430 805 465C790 480 730 475 700 460C660 450 600 430 590 405Z",
  "M750 480C780 450 820 480 822 510C800 520 770 515 750 480Z",
  "M572 480C580 460 628 460 628 490C620 530 575 530 572 480Z",
  "M958 265C970 235 1020 230 1040 250C1020 285 990 275 958 275Z",
  "M1040 440C1050 410 1090 420 1097 450C1080 480 1060 470 1040 440Z",
  "M930 935C960 870 1080 820 1112 838C1125 890 1090 950 1020 972C960 975 920 960 930 935Z",
  "M745 1055C780 990 840 930 870 900C900 870 950 860 990 880C1030 850 1060 850 1070 880C1080 940 1090 970 1122 975C1120 1010 1060 1040 1070 1080C1050 1120 1000 1125 960 1110C930 1095 920 1060 920 1080C920 1120 890 1140 870 1125C860 1100 860 1070 860 1055C820 1060 770 1062 745 1055Z",
  "M850 950C900 900 960 930 910 970C960 920 1050 950 1050 900C1090 1000 1090 1050 1040 1060C980 1040 930 1060 900 980Z",
  "M530 988C590 985 610 1040 592 1100C580 1160 550 1195 520 1192C480 1180 465 1120 470 1080C478 1030 500 990 530 988Z",
  "M525 1050C560 1010 605 1020 605 1060C600 1100 590 1115 575 1112C545 1100 530 1080 525 1050Z",
  "M1210 1020C1250 960 1350 980 1367 1005C1330 1020 1250 1015 1210 1020Z",
];
const reds = [
  "M65 285C130 272 290 280 325 310C330 325 240 345 195 348C180 385 140 410 97 420Z",
  "M892 155C920 125 960 115 985 113C995 130 1000 200 995 228C950 220 900 200 892 155Z",
  "M1030 160C1040 120 1090 95 1120 100C1150 110 1160 130 1150 140C1120 165 1050 185 1030 170Z",
  "M1228 315C1240 305 1270 315 1285 285C1300 265 1330 275 1328 295C1310 320 1340 325 1375 320C1400 325 1412 390 1405 415C1380 410 1355 430 1355 450C1365 480 1400 475 1400 495C1398 520 1375 528 1360 520C1330 500 1300 480 1295 495C1285 530 1260 530 1255 520C1240 480 1240 440 1238 415C1215 405 1190 415 1190 405C1210 380 1240 385 1245 375C1240 350 1228 340 1228 315Z",
  "M1097 462C1120 400 1170 370 1197 368C1215 400 1218 470 1212 488C1180 500 1120 495 1097 462Z",
  "M165 660L262 627L262 607C300 605 340 615 380 625C380 590 380 570 330 550C300 520 330 505 350 510C390 520 420 535 435 540C440 505 480 490 498 515C505 560 505 600 520 645L558 640C555 670 530 700 535 715C545 745 520 755 500 755C480 760 460 800 430 812C400 810 395 780 410 765C430 745 420 735 360 740L350 735L297 745C285 720 280 700 278 685L208 718C185 710 165 690 165 660Z",
  "M233 860C260 850 300 880 330 880C340 850 385 840 395 860L398 910C450 900 505 910 508 930C500 990 430 1040 382 1058C370 1080 350 1105 330 1110C310 1110 295 1090 320 1070C325 1055 310 1045 280 1043C255 1020 245 970 245 952L290 955C285 920 270 905 245 898C235 890 232 870 233 860Z",
  "M448 975C500 960 640 960 643 990C640 1020 560 1045 512 1045C500 1010 470 990 448 975Z",
  "M450 1295C500 1260 570 1240 590 1248C595 1290 550 1350 500 1368C480 1350 455 1320 450 1295Z",
  "M580 1312C640 1295 700 1300 730 1345C725 1400 660 1430 610 1444C590 1410 580 1360 580 1312Z",
  "M1385 1045C1400 990 1450 950 1490 935C1505 960 1510 1010 1505 1045C1470 1065 1400 1075 1385 1045Z",
  "M1325 735C1330 690 1365 655 1395 657C1430 660 1455 685 1450 705C1420 735 1350 765 1325 740Z",
  "M1220 990C1250 955 1330 945 1365 1005C1330 1020 1240 1010 1220 990Z",
  "M1150 685C1190 640 1255 635 1265 655C1275 700 1265 740 1240 752C1210 740 1180 720 1150 685Z",
  "M955 455C980 425 1080 425 1095 470C1060 485 980 480 955 455Z",
];
/* deeper red folds where two walls of a body overlap */
const redFolds = [
  "M140 285C165 284 195 310 190 346C160 342 140 312 140 285Z",
  "M1230 318L1318 305L1285 335L1246 375Z",
  "M1268 385L1310 440L1298 472C1290 440 1280 420 1268 385Z",
  "M1190 405C1194 385 1205 372 1215 370L1212 412Z",
  "M262 627L278 625L282 680L270 682Z",
  "M325 625L345 630L372 740L360 740C335 700 325 660 325 625Z",
  "M378 575L412 572L415 650L440 690L425 700C400 690 390 630 378 575Z",
  "M430 735C470 720 510 690 520 668L530 705C510 740 480 755 425 752Z",
  "M350 930L395 912L395 945L375 960L382 1056C360 1030 350 980 350 930Z",
  "M290 920L325 915L342 1010C310 1010 300 960 290 920Z",
  "M330 1060L382 1010L380 1058L340 1085Z",
  "M448 975L505 966L500 1010Z",
];
const caps: number[][] = [
  [82, 352, 8, 68, -13], [989, 168, 8, 55, -4], [1121, 125, 33, 24, 15], [1305, 293, 25, 18, 0], [1388, 368, 14, 49, -10], [1377, 498, 22, 22, 0],
  [1203, 430, 10, 58, -3], [189, 688, 33, 20, 52], [246, 878, 13, 20, 0], [321, 1091, 14, 18, -20], [474, 1332, 44, 13, 56], [593, 1378, 11, 66, -11],
  [1494, 990, 11, 55, -4], [1414, 687, 38, 27, 20], [263, 1000, 9, 45, -16], [288, 715, 8, 30, -15],
];
const olives = [
  "M1005 705C1030 690 1030 650 1040 640L1085 615C1110 640 1150 640 1170 660C1180 720 1230 730 1200 735C1150 720 1140 750 1150 765C1180 790 1190 810 1160 812C1130 780 1090 800 1070 818C1045 800 1050 740 1040 720Z",
  "M1170 685C1200 640 1255 635 1262 655C1262 690 1220 690 1170 690Z",
];

function VorticityScene() {
  return (
    <svg width="570" height="550" viewBox="0 0 1568 1568" preserveAspectRatio="none">
      <g stroke="#333" strokeWidth="2.6" fill="none">
        <path d="M961 38L1052 828L248 1110M1052 828L1520 1125" />
      </g>
      <g fill="rgb(0,160,6)" fillOpacity=".62">{brights.map((d) => <path key={d} d={d} />)}</g>
      <g fill="url(#leaf)" fillOpacity=".6">
        {greens.map((d) => <path key={d} d={d} />)}
        {greenOvals.map(([x, y, rx, ry, a], i) => <ellipse key={i} cx={x} cy={y} rx={rx} ry={ry} transform={`rotate(${a} ${x} ${y})`} />)}
      </g>
      <g fill="#fff"><path d="M975 1055L1000 1045C1012 1060 1000 1080 990 1082Z" /><ellipse cx="650" cy="317" rx="9" ry="4" /></g>
      <g fill="rgb(86,62,8)" fillOpacity=".66">{olives.map((d) => <path key={d} d={d} />)}</g>
      <g fill="url(#meat)" fillOpacity=".62">{reds.map((d) => <path key={d} d={d} />)}</g>
      <g fill="rgb(158,8,14)" fillOpacity=".55">{redFolds.map((d) => <path key={d} d={d} />)}</g>
      <g fill="none" stroke="rgb(150,10,14)" strokeOpacity=".7" strokeWidth="2.5">
        <path d="M412 590C440 540 480 560 483 600C470 610 440 606 412 640M262 607C290 640 300 700 297 745M480 760C470 720 440 700 430 690M350 930C360 905 390 905 398 912" />
      </g>
      <g fill="#dcb4b4" fillOpacity=".72">
        {caps.map(([x, y, rx, ry, a], i) => <ellipse key={i} cx={x} cy={y} rx={rx} ry={ry} transform={`rotate(${a} ${x} ${y})`} />)}
        <path d="M1085 608L1120 610L1115 625L1092 620Z" fill="#e07070" />
      </g>
      <g fill="rgb(0,110,10)" fillOpacity=".7">
        <ellipse cx="325" cy="536" rx="20" ry="26" /><ellipse cx="414" cy="786" rx="14" ry="20" fillOpacity=".45" />
        <ellipse cx="183" cy="328" rx="4" ry="16" /><circle cx="586" cy="1332" r="5" />
      </g>
      <g stroke="#333" strokeWidth="3" fill="none">
        <path d="M37 198L961 38L1470 205L1520 1125L635 1536L248 1110ZM37 198L430 450L1470 205M430 450L635 1536" />
      </g>
    </svg>
  );
}

const check = (
  <svg width="24" height="24" viewBox="0 0 24 24"><path d="M4 12L9.5 18L20 5" fill="none" stroke="#333" strokeWidth="2.4" /></svg>
);

function ViewTabItem({ w, textW, text, active, blank }: { w: number; textW: number; text: string; active?: boolean; blank?: boolean }) {
  return (
    <ViewTab $w={w}>
      <svg width={w + 1} height="29">
        <path d={`M.5 0L11 24Q13 28 17 28H${w - 4}Q${w} 28 ${w} 24V0`} fill={active ? "#fff" : blank ? "#e4e7ee" : "#d3d8ea"} stroke="#a5adc2" />
      </svg>
      {blank ? <span><svg width="11" height="11"><path d="M4 1H7V4H10V7H7V10H4V7H1V4H4Z" fill="#fff" stroke="#555" /></svg></span>
        : <span><Fit text={text} w={textW} size={16} font={UI} /></span>}
    </ViewTab>
  );
}

const RhinoHead = ({ size }: { size: number }) => (
  <svg width={size} height={size} viewBox="0 0 36 36">
    <rect width="36" height="36" fill="#1a1a1a" />
    <path d="M2 0L8 3L9 10L7 16L14 13L24 5L35 1V20L33 29L28 35L24 28L17 26L10 20L4 12Z" fill="#dcdcdc" />
    <path d="M10 0H26L14 9L11 7Z" fill="#111" />
    <path d="M13 13L20 17L26 19L24 24L17 21Z" fill="#777" />
    <path d="M22 27L27 24L26 31Z" fill="#333" />
    <path d="M0 18L16 36H0Z" fill="#555" />
    <circle cx="18" cy="18" r="1.5" fill="#e02020" />
  </svg>
);

function RhinoWindow() {
  return (
    <Rhino>
      <TitleBar><RhinoHead size={23} /><Fit text="batch.3dm (47 KB) - Rhinoceros 5.0 Educational - [animation_2]" w={497} size={16} font={UI} color="#999" /></TitleBar>
      <RhinoMenu>{menuItems.map(([t, w, m]) => <Fit key={t} text={t} w={w} size={15.5} font={UI} color="#6d6d6d" mnemonic={m < t.length ? m : undefined} />)}</RhinoMenu>
      <CommandDock>
        <CommandPane>
          <History>
            <Fit text="Loading Rhino Render, version 1.50, Sep 13 2016, 23:38:59" w={481} size={17.5} />
            <Fit text="Command: Grasshopper" w={196} size={17.5} />
          </History>
          <Prompt><Fit text="Command:" w={97} size={17.5} bold /></Prompt>
        </CommandPane>
      </CommandDock>
      <Dock $h={36}>
        <RenderBar>{renderIcons.map((g, i) => <Glyph key={i} corner>{g}</Glyph>)}</RenderBar>
      </Dock>
      <Dock $h={68}>
        <TabbedBar>
          <ToolTabs>
            {toolTabs.map(([t, w, tw, pad], i) => (
              <ToolTab key={t} $w={w} $pad={pad} $active={i === 0}><Fit text={t} w={tw} size={16} /></ToolTab>
            ))}
          </ToolTabs>
          <ToolRow>{standardIcons.map(([g, k], i) => <Glyph key={i} corner={k}>{g}</Glyph>)}</ToolRow>
        </TabbedBar>
      </Dock>
      <Work>
        <SidePanel>
          <SideGrip />
          <SideGrid>{sideIcons.map(([g, k], i) => <Glyph key={i} corner={k}>{g}</Glyph>)}</SideGrid>
        </SidePanel>
        <Viewport>
          <ViewTag>
            <Fit text="animation_2" w={97} size={16.5} font={UI} color="#111" />
            <svg width="12" height="26"><path d="M.5 1V25" stroke="#111" /><path d="M3 11H11L7 15.5Z" fill="#000" /></svg>
          </ViewTag>
          <Scene><VorticityScene /></Scene>
        </Viewport>
      </Work>
      <ViewTabs>
        <ViewTabItem w={122} textW={97} text="animation_2" active />
        <ViewTabItem w={56} textW={31} text="Top" />
        <ViewTabItem w={67} textW={42} text="Front" />
        <ViewTabItem w={68} textW={42} text="Right" />
        <ViewTabItem w={47} textW={0} text="" blank />
      </ViewTabs>
      <OsnapBar>
        {osnaps.map(([t, w, tw, on, off], i) => (
          <Osnap key={i} $w={w}><Box $off={off}>{on && check}</Box>{t && <Fit text={t} w={tw} size={16} />}</Osnap>
        ))}
      </OsnapBar>
      <StatusBar>
        <StatusCell $w={68} $pad={4}><Fit text="CPlane" w={58} size={16.5} /></StatusCell>
        <StatusCell $w={88} $pad={3}><Fit text="x 7.919569" w={87} size={16.5} /></StatusCell>
        <StatusCell $w={88} $pad={3}><Fit text="y -6.41688" w={84} size={16.5} /></StatusCell>
        <StatusCell $w={88} $pad={3}><Fit text="z 0.000000" w={88} size={16.5} /></StatusCell>
        <StatusCell $w={88} $pad={16}><Fit text="Meters" w={55} size={16.5} /></StatusCell>
        <StatusCell $w={173} $pad={3}><Swatch /><Fit text="Default" w={57} size={16.5} /></StatusCell>
        <StatusCell $w={91} $pad={5}><Fit text="Grid Snap" w={81} size={16.5} /></StatusCell>
        <StatusCell $w={58} $pad={6}><Fit text="Ortho" w={45} size={16.5} /></StatusCell>
        <StatusCell $w={65} $pad={6}><Fit text="Planar" w={52} size={16.5} /></StatusCell>
        <StatusCell $w={60} $pad={4} $on><Fit text="Osna" w={41} size={16.5} bold /></StatusCell>
      </StatusBar>
    </Rhino>
  );
}

/* ---------- Grasshopper window ---------- */

const Gh = styled.div`
  width: 1060px;
  height: 1140px;
  flex: none;
  display: flex;
  flex-direction: column;
  background: #f0f0f0;
  border: solid #7a7a7a;
  border-width: 1px 2px 1px 1px;
  box-shadow: 0 0 14px rgba(0, 0, 0, 0.5);
  position: relative;
  z-index: 1;
`;
const GhTitle = styled.div`
  height: 44px;
  flex: none;
  display: flex;
  align-items: center;
  justify-content: space-between;
  padding: 0 26px 0 11px;
  background: #fff;
`;
const GhMenu = styled.div`
  height: 30px;
  flex: none;
  display: flex;
  align-items: center;
  justify-content: space-between;
  padding: 1px 9px 0 19px;
  background: linear-gradient(90deg, #f0f0f0, #fcfcfc);
`;
const MenuGroup = styled.div`
  display: flex;
  gap: 21.5px;
`;
const GhTabs = styled.div`
  height: 22px;
  flex: none;
  display: flex;
  gap: 19.8px;
  padding: 0 0 0 1px;
  background: #efefef;
  border-bottom: 1px solid #9a9a9a;
  > span { margin-top: 5px; }
`;
const ActiveTab = styled.div`
  width: 74px;
  height: 23px;
  margin-right: -9px;
  padding: 2px 0 0 9px;
  border: 1px solid #9a9a9a;
  border-bottom: none;
  border-radius: 6px 6px 0 0;
  background: linear-gradient(#fff, #dcdcdc);
`;
const Ribbon = styled.div`
  height: 91px;
  flex: none;
  display: flex;
  gap: 3px;
  padding: 3px 0 0 3px;
  background: linear-gradient(#d6d6d6, #f0f0f0);
  border-bottom: 2px solid #707070;
`;
const Group = styled.div<{ $w: number }>`
  width: ${(q) => q.$w}px;
  height: 73px;
  display: flex;
  flex-direction: column;
  justify-content: space-between;
  overflow: hidden;
  border: 1px solid #6a6a6a;
  border-radius: 4px;
  background: linear-gradient(#d4d4d4, #eaeaea);
`;
const GroupIcons = styled.div`
  display: flex;
  padding: 1px 0 0 2px;
`;
const Column = styled.div`
  display: flex;
  flex-direction: column;
`;
const Divider = styled.div`
  width: 10px;
  height: 48px;
  margin-top: 5px;
  border-left: 1px solid #b4b4b4;
  transform: translateX(4px);
`;
const GroupBand = styled.div`
  height: 14px;
  display: flex;
  align-items: center;
  background: #161616;
`;
const GroupName = styled.div`
  flex: 1;
  display: flex;
  justify-content: center;
`;
const GhTools = styled.div`
  height: 37px;
  flex: none;
  display: flex;
  align-items: center;
  justify-content: space-between;
  padding: 0 4px 1px 2px;
  background: linear-gradient(#fdfdfd, #eee);
  border-left: 2px solid #777;
`;
const Tools = styled.div`
  display: flex;
  align-items: center;
`;
const Combo = styled.div`
  width: 103px;
  height: 36px;
  display: flex;
  align-items: center;
  justify-content: space-between;
  padding: 2px 7px 0 3px;
  margin-right: 1px;
  background: #fff;
  border: 1px solid #777;
`;
const Slot = styled.div<{ $w: number; $on?: boolean }>`
  width: ${(q) => q.$w}px;
  height: 33px;
  display: flex;
  align-items: center;
  justify-content: center;
  border: 1px solid ${(q) => (q.$on ? "#3a96f4" : "transparent")};
`;
const Sep = styled.div<{ $l: number; $r: number }>`
  width: 1px;
  height: 26px;
  background: #bbb;
  margin: 0 ${(q) => q.$r}px 0 ${(q) => q.$l}px;
`;
const Canvas = styled.div`
  position: relative;
  height: 888px;
  flex: none;
  overflow: hidden;
  background: #d4cfc8;
  border: solid #777;
  border-width: 0 0 0 1px;
  border-bottom: 2px solid #f8f8f8;
`;
const GhStatus = styled.div`
  flex: 1;
  display: flex;
  align-items: center;
  justify-content: space-between;
  padding: 2px 3px 0 6px;
  background: linear-gradient(90deg, #f0f0f0, #fcfcfc);
`;

/* canvas objects are placed in screen space; the canvas starts at (852, 225) */
const OX = 852;
const OY = 225;
const place = css<{ $x: number; $y: number; $w: number; $h: number }>`
  position: absolute;
  left: ${(q) => q.$x - OX}px;
  top: ${(q) => q.$y - OY}px;
  width: ${(q) => q.$w}px;
  height: ${(q) => q.$h}px;
`;
const Scribble = styled.div`
  ${place}
  span { -webkit-text-stroke: 0.7px #000; }
`;
const nub = css<{ $side: "l" | "r" }>`
  &::after {
    content: "";
    position: absolute;
    top: calc(50% - 7px);
    ${(q) => (q.$side === "l" ? "left: -7px; border-radius: 7px 0 0 7px;" : "right: -7px; border-radius: 0 7px 7px 0;")}
    width: 7px;
    height: 14px;
    background: #fff;
    border-color: #000;
    border-style: solid;
    border-width: ${(q) => (q.$side === "l" ? "2.5px 0 2.5px 2.5px" : "2.5px 2.5px 2.5px 0")};
  }
`;
const Component = styled.div`
  ${place}
  display: flex;
  padding: 1px 0;
  border: 1.5px solid #3c3c40;
  border-radius: 4px;
  background: linear-gradient(#f0f0f4 0, #cfced8 9px, #a6a5b4 10px, #8b8997 100%);
  box-shadow: 0 1px 3px rgba(0, 0, 0, 0.35);
`;
const Ports = styled.div<{ $w: number }>`
  width: ${(q) => q.$w}px;
  flex: none;
  display: flex;
  flex-direction: column;
`;
const Port = styled.div<{ $side: "l" | "r" }>`
  position: relative;
  flex: 1;
  display: flex;
  align-items: center;
  padding: 1px 7px 0 6px;
  justify-content: ${(q) => (q.$side === "l" ? "flex-end" : "flex-start")};
  ${nub}
`;
const Spine = styled.div`
  width: 31px;
  flex: none;
  display: flex;
  align-items: center;
  justify-content: center;
  border: 1.5px solid #111;
  border-radius: 4px;
  background: linear-gradient(#999 0, #666 7px, #484848 8px, #323232 100%);
`;
const SpineText = styled.div`
  writing-mode: vertical-rl;
  transform: rotate(180deg);
  font: 700 23.5px/1 ${UI};
  color: #fff;
`;
const TimeTag = styled.div`
  ${place}
  display: flex;
  align-items: center;
  padding-left: 5px;
  border: 1.5px solid #333;
  background: linear-gradient(#fff, #c8c8c8);
`;
const Pointer = styled.div`
  ${place}
  clip-path: polygon(50% 0, 100% 100%, 0 100%);
  background: #f4f4f4;
`;
const Param = styled.div<{ $green?: boolean }>`
  ${place}
  display: flex;
  align-items: center;
  gap: 8px;
  padding: 0 14px 0 4px;
  border: 1.5px solid ${(q) => (q.$green ? "#2c5c10" : "#333")};
  border-radius: 4px;
  background: ${(q) => (q.$green ? "linear-gradient(#d6f8bc 0, #b4f080 9px, #94e83e 10px, #86dc30 100%)" : "linear-gradient(#fbfbfb 0, #ececec 10px, #dadada 11px, #c4c4c4 100%)")};
  box-shadow: 0 1px 2px rgba(0, 0, 0, 0.3);
  > span:last-of-type { margin-left: auto; }
`;
const Nub = styled.i<{ $side: "l" | "r" }>`
  position: absolute;
  inset: 0;
  ${nub}
`;
const Badge = styled.b`
  width: 17px;
  height: 17px;
  border: 1px solid #666;
  border-radius: 3px;
  background: linear-gradient(#f6f6f6, #c4c4c4);
`;
const YellowPanel = styled.div`
  ${place}
  border: 1.5px solid #444;
  border-radius: 4px;
  background: linear-gradient(90deg, transparent 23px, #e6e04e 23px, #e6e04e 24px, transparent 24px) #fffa5a;
  box-shadow: 0 1px 3px rgba(0, 0, 0, 0.35);
`;
const PanelRow = styled.div<{ $dark: boolean }>`
  height: 25px;
  display: flex;
  align-items: center;
  gap: 11px;
  padding: 0 0 4px 6px;
  background: ${(q) => (q.$dark ? "rgba(225, 215, 60, 0.38)" : "transparent")};
  margin: 0 1px;
`;
const GroupArea = styled.div`
  ${place}
  background: rgba(255, 255, 255, 0.6);
  border: 1px solid rgba(150, 150, 140, 0.5);
`;
const Layer = styled.svg`
  position: absolute;
  left: 0;
  top: 0;
`;

const Hex = () => <>{p("M2.4 14L8.2 3.6H19.8L25.6 14L19.8 24.4H8.2Z", "url(#steel)", "#111", 1)}</>;
const hexed = (g: React.ReactNode) => <><Hex />{g}</>;
const W = "#fff";
const tile = (g: React.ReactNode, fill = "url(#tile)") => <><rect x="2.8" y="2.8" width="22.4" height="22.4" rx="2.5" fill={fill} stroke="#333" strokeWidth="1.3" />{g}</>;
const digit = (t: string, s = 15) => (
  <text x="14" y="19.5" fontFamily='"Liberation Serif", serif' fontWeight="700" fontSize={s} fill="#fff" textAnchor="middle" textLength={t.length > 1 ? 17 : undefined}>{t}</text>
);

type Cols = (React.ReactNode[] | null)[];
const geometry: Cols = [
  [hexed(p("M11 11L17 17M17 11L11 17", "none", W, 2.6)), hexed(<>{p("M9 19L15 13", "none", W, 3.2)}{p("M12 9.5H18.5V16Z", W, W, 1)}</>)],
  null,
  [hexed(e(14, 14, 7, 5, "none", W, 2.2)), hexed(p("M8 10Q17 11 19 20M8 10L13 7", "none", W, 2.2))],
  [hexed(<><g transform="rotate(-38 14 14)">{e(14, 14, 8.5, 4.5, "none", "#ddd", 1.6)}{e(14, 14, 4.5, 2, "none", "#ddd", 1.3)}</g></>), hexed(<>{p("M10 18L18 10", "none", W, 1.8)}{r(7.5, 16, 4.5, 4.5, "#111", W, 1.4)}{r(16, 7.5, 4.5, 4.5, "#111", W, 1.4)}</>)],
  [hexed(<>{p("M7 13L11 8L22 10L18 18L7 18Z", "#888", W, 1.5)}{p("M9.5 13H15V10M15 13L14 17", "none", W, 1.3)}</>), hexed(p("M14 7L20 14L14 20L8 14ZM11 7.5L7 12M17 20.5L21 16M8 17L12 21M17 8L21 12", "none", W, 1.3))],
  null,
  [hexed(<>{p("M8 10L14 7L20 10V18L14 21L8 18Z", "#bbb", "#eee", 1)}{p("M8 10L14 12L20 10M14 12V21", "#888", "#666", 1)}</>), hexed(<>{p("M8 14L14 8L20 11L20 15L13 21L8 18Z", "#ddd", "#999", 0.8)}{e(17, 10.5, 4, 2.6, "#999", "#eee", 1)}</>)],
  [hexed(p("M14 7V21M7.5 14H20.5M9.5 9.5L18.5 18.5M18.5 9.5L9.5 18.5M10 10H18V18H10Z", "none", "#ccc", 1.2)), hexed(<>{p("M14 8L20 9V19L8 20L11 12Z", "#bbb", "#eee", 1)}{p("M13 8V20M10 15L20 14", "none", "#555", 1)}</>)],
];
const primitive: Cols = [
  [hexed(<>{c(14, 14, 5.5, W, W, 1.4)}{p("M18 10A5.5 5.5 0 0 0 10 18Z", "#222", W, 1)}</>), hexed(digit("7", 17))],
  [hexed(digit("0.1", 14)), hexed(digit("A", 17))],
];
const inputs: Cols = [
  [tile(<>{p("M14 7V15M5.5 21V18M8.5 21V18M11.5 21V18M14.5 21V18M17.5 21V18M20.5 21V18", "none", "#111", 1.5)}{p("M5 19H23", "none", "#111", 1.8)}{p("M10.5 12.5H17.5L14 17Z", "#111", "#111", 0.5)}</>),
    tile(p("M5 20Q9 12 9 18Q10 19 13 11Q12 19 14 18Q18 8 17 14Q16 18 18 16L23 7", "none", "#a8780a", 2.2), "#ffce2e")],
  null,
  [tile(<>{r(9.5, 5.5, 9, 17, "#222", "#111", 1)}{r(11, 6.5, 6, 7, "#eee", "#eee", 0.6)}</>), <>{c(14, 14, 11.3, "#999", "#444", 1.2)}{c(14, 14, 8, "#2c2c2c", "#bbb", 1)}{p("M20 11L24 14L20 17Z", "#222", "#222", 0.6)}</>],
  [tile(<><text x="11" y="12.5" fontFamily={SANS} fontStyle="italic" fontWeight="700" fontSize="12" fill="#666">4</text><text x="8" y="24.5" fontFamily={SANS} fontStyle="italic" fontWeight="700" fontSize="14" fill="#333">5</text></>), tile(<>{r(6, 6, 16, 4, "#ddd", "#222", 1)}{r(6, 12, 16, 4, "#ddd", "#222", 1)}{r(6, 18, 16, 4, "#ddd", "#222", 1)}</>)],
  null,
  [tile(<>{p("M3.5 17.5H24.5", "none", "#111", 1.2)}{c(5, 17.5, 1.7, W)}{c(18, 17.5, 1.7, W)}</>, "url(#pink)"),
    tile(<>{["#bdf26a", "#3fae1a", "#8cec40", "#e6ff9c", "#1c7a12", "#0a4a08", "#59c21e", "#a4f8b4", "#3fae1a", "#165c10", "#0c8a3c", "#6cffc0", "#bdf26a", "#1c7a12", "#26c07c", "#5affd8"].map((col, i) => <rect key={i} x={4 + (i % 4) * 5} y={4 + Math.floor(i / 4) * 5} width="5" height="5" fill={col} />)}</>)],
];
const util: Cols = [
  [<>{p("M9 16Q11 9 17 5Q18 12 19 17", "none", "#4a6a10", 1.3)}{p("M8 8Q12 2 17 5Q13 9 8 8Z", "#5fb522", "#2c6a10", 0.8)}{c(8.5, 19, 4.4, "url(#red)", "#800", 0.6)}{c(19, 20, 4.4, "url(#red)", "#800", 0.6)}</>,
    tile(<>{p("M14 23V13M14 18L8 12M14 16L20 10M14 14V7M9 13L6 10M19 11L22 12M11 15L11 8M17 13L17 7", "none", "#111", 1.6)}{p("M4 22.5Q14 20 24 22.5V24H4Z", "#111", "none", 0)}<path d="M5 10Q9 4 14 5Q21 4 23 11Q20 14 18 11Q14 14 11 11Q8 14 5 10Z" fill="#111" opacity=".45" /></>)],
  null,
  [p("M4 11H14V6.5L24 14L14 21.5V17H4Z", "#4c4c4c", "#222", 1.2), p("M4 11H14V6.5L24 14L14 21.5V17H4Z", "#eee", "#666", 1.2)],
  null,
  [<>{e(12, 11, 6.5, 7.5, "#bbb", "#777", 1)}{c(11, 10, 3, "#fff", "#999", 0.6)}<g transform="rotate(30 18 17)">{e(18, 17, 5.8, 7, "#d83088", "#8a1050", 1)}{e(17, 14, 2.8, 3.4, "#ff9ccc", "none", 0)}</g></>,
    <>{p("M11.5 4.5H16.5M12.5 5V12L6.5 22Q7 24 9 24H19Q21 24 21.5 22L15.5 12V5", "#fbe4f0", "#a8487c", 1.2)}{p("M10 16H18L21.2 22Q21 23.6 19 23.6H9Q7 23.6 6.9 22Z", "#e0207c", "none", 0)}</>],
];

function RibbonGroup({ name, w, tw, cols }: { name: string; w: number; tw: number; cols: Cols }) {
  return (
    <Group $w={w}>
      <GroupIcons>
        {cols.map((col, i) => col === null ? <Divider key={i} /> : (
          <Column key={i}>{col.map((g, j) => <Glyph key={j}>{g}</Glyph>)}</Column>
        ))}
      </GroupIcons>
      <GroupBand>
        <GroupName><Fit text={name} w={tw} size={10.5} color="#fff" /></GroupName>
        <svg width="12" height="12"><path d="M5.5 2V9M2.5 6L5.5 9L8.5 6" stroke="#bbb" fill="none" strokeWidth="1.3" /></svg>
      </GroupBand>
    </Group>
  );
}

const Drop = () => <svg width="9" height="6"><path d="M1 1H8L4.5 4.8Z" fill="#000" /></svg>;

const toolGlyph = {
  open: <>{p("M7 14V5.5H16L20 9V14", "#eee", "#666", 1)}{p("M4.5 12H11L13 9.5H24L23 25H4.5Z", "url(#lime)", "#3a7a14", 1.1)}</>,
  save: <>{p("M3 3H25V25H5L3 23Z", "url(#save)", "#0a2c80", 1.2)}{r(7, 3.5, 14, 9.5, "#e4e6ea", "#aab", 0.8)}{r(9, 17, 11, 8, "#e0e4ea", "#456", 0.8)}{r(11, 18.5, 4, 5.5, "#1c50b8", "none", 0)}</>,
  frame: <>{p("M4.5 10V4.5H10M18 4.5H23.5V10M23.5 18V23.5H18M10 23.5H4.5V18", "none", "#111", 3)}{p("M12.3 12.3L15.7 15.7M15.7 12.3L12.3 15.7", "none", "#111", 1.3)}</>,
  eye: <>{p("M1.5 14.5Q14 1 26.5 14.5Q14 24.5 1.5 14.5Z", "#fff", "#333", 1.3)}{c(14, 13.6, 6.3, "#58b4e8", "#124a80", 1)}{c(14, 13.6, 2.8, "#05192c", "#05192c", 0.6)}{c(12.2, 11.6, 1.2, "#fff", "none", 0)}</>,
  pen: <>{p("M12 16L24 3L27 10L17 22Z", "#e8352c", "#8a1410", 0.9)}{p("M20 7L25 13", "none", "#ff9a90", 1.4)}{p("M12 16L17 22L9 24Z", "#e8c088", "#853", 0.8)}{p("M2 9Q7 7 5 14Q0 24 11 24", "none", "#5a1a14", 1.6)}</>,
  shadow: <>{e(14, 21, 10.5, 5.5, "#333", "#555", 1)}{p("M3.5 14L8 6Q13 1 20 3L24.5 7L21 15Q12 19 3.5 14Z", "#ddd", "#777", 1)}{e(18, 8, 5, 3.6, "#f6f6f6", "#777", 0.9)}</>,
  wire: <><g transform="rotate(-42 14 14)">{r(5, 6, 18, 16, "#fff", "#444", 1.1)}{e(21.5, 14, 4.5, 8, "#fff", "#555", 1)}{e(6.5, 14, 4.5, 8, "#fff", "#555", 1)}{e(21.5, 14, 2.3, 4.8, "#eee", "#666", 0.9)}{e(6.5, 14, 2.3, 4.8, "#eee", "#666", 0.9)}</g></>,
  redTube: <>{p("M2 15L13 3.5Q17 1 22 4L26.5 10L15.5 24Q10 27.5 5 23.5Q1 19 2 15Z", "#c4140c", "#5c0000", 1)}{e(19.5, 8.5, 6, 4.6, "#9a0a04", "#5c0000", 1)}{e(20.5, 9, 3, 2.3, "#4c0000", "none", 0)}{p("M5 16L13 8", "none", "#f0504a", 1.6)}</>,
  greenTube: <>{p("M2 15L13 3.5Q17 1 22 4L26.5 10L15.5 24Q10 27.5 5 23.5Q1 19 2 15Z", "#d4d4d4", "#666", 1)}{p("M7 9L13 3.5Q17 1 22 4L26.5 10L20 19Z", "#4fae1c", "#2a6a0c", 1)}{e(19.5, 8.5, 5, 3.6, "#2c7008", "#1c5004", 0.8)}{p("M3 5L24 26", "none", "#111", 1.4)}</>,
  halfBall: <>{c(14, 14, 11.5, "#f0a030", "#555", 1)}{p("M14 2.5A11.5 11.5 0 0 1 14 25.5Z", "#ddd", "#666", 0.8)}{p("M4 9Q3 19 12 25L13.5 25V17Q8 16 4 9Z", "#b04c08", "none", 0)}</>,
  ball: <>{p("M14 4L21 6.5L25 13L23 20.5L16 24L8.5 22.5L3.5 16L5 8Z", "url(#sky)", "#1a3c90", 1.3)}</>,
};

const ghTabs: [string, number][] = [
  ["Maths", 42], ["Sets", 32], ["Vector", 45], ["Curve", 42], ["Surface", 55], ["Mesh", 38], ["Intersect", 60], ["Transform", 72], ["Display", 54], ["Wb", 24], ["PanelingTools", 103], ["LunchBox", 72],
];
const ghMenu: [string, number][] = [["File", 27], ["Edit", 29], ["View", 36], ["Display", 55], ["Solution", 59], ["Help", 35]];
const panelLines = ["PASSES - Y", "-", "Total - 96", "Cut - 10 Stitch - 10", "Untouched - 76", "-", "To Export - 86"];

const dark = "#5a5954";
const Double = ({ d, stroke = dark, core = "#c9c5be", mid = "#8a8882" }: { d: string; stroke?: string; core?: string; mid?: string }) => (
  <g fill="none"><path d={d} stroke={stroke} strokeWidth="7" /><path d={d} stroke={mid} strokeWidth="2.8" /><path d={d} stroke={core} strokeWidth="1.6" /></g>
);
const Dashed = ({ d }: { d: string }) => (
  <g fill="none">
    <path d={d} stroke="rgba(40,40,36,.75)" strokeWidth="6.4" strokeLinecap="round" strokeDasharray="12 10" />
    <path d={d} stroke="#d4cfc8" strokeWidth="2" strokeDasharray="12 10" />
  </g>
);

function Wires() {
  return (
    <Layer width="1055" height="888" viewBox={`${OX} ${OY} 1055 888`}>
      <g fill="none" stroke="rgba(0,0,0,.22)" strokeWidth="1.5">
        <path d="M1157 565C1180 564 1176 556 1160 550L1104 530M882 438C862 439 854 447 886 457" />
        <path d="M852 625C880 634 900 640 936 653C1000 675 1050 703 1111 718C1170 730 1230 736 1280 736" />
        <path d="M852 745C980 753 1100 762 1260 770L1610 788L1907 803" />
        <path d="M852 743C1000 762 1140 800 1260 826L1593 899L1907 965" />
        <path d="M1511 736C1650 736 1780 725 1907 709M1511 736C1640 737 1760 748 1907 782" />
      </g>
      <g fill="none" stroke={dark} strokeWidth="4">
        <path d="M852 574Q890 578 930 578M852 679Q890 677 930 677" />
        <path d="M1157 615C1219 615 1219 686 1281 686" />
        <path d="M1511 686C1751 686 1517 400 1757 400M1858 400H1882" />
      </g>
      <Double d="M852 629Q890 628 930 627" />
      <Double d="M1157 640C1297 640 1172 441 1312 441" />
      <Double d="M1157 665C1227 665 1226 581 1296 581" />
      <Double d="M1157 690C1270 690 1170 872 1283 872" stroke="url(#wireFade)" mid="#c4d4b0" core="#d4cfc8" />
      <Double d="M1489 872C1640 872 1760 868 1907 868" stroke="#76d21c" mid="#bcdc98" core="#cfd4c0" />
      <Dashed d="M1466 441C1661 441 1688 357 1883 357" />
      <Dashed d="M1466 441C1676 441 1714 631 1924 631" />
      <Dashed d="M1466 441C1693 441 1701 774 1928 774" />
      <Dashed d="M1472 581C1620 581 1760 606 1907 665" />
    </Layer>
  );
}

function GridLines() {
  const xs = [937.5, 1124.5, 1312.5, 1499.5, 1687.5, 1874.5];
  const ys = Array.from({ length: 14 }, (_, i) => Math.floor(245.4 + 62.5 * i) + 0.5);
  return (
    <Layer width="1055" height="888" viewBox={`${OX} ${OY} 1055 888`}>
      <g stroke="#bcb8b0" strokeWidth="1">
        {xs.map((x) => <path key={x} d={`M${x} 224V1113`} />)}
        {ys.map((y) => <path key={y} d={`M852 ${y}H1907`} />)}
      </g>
    </Layer>
  );
}

type NodeProps = { x: number; y: number; w: number; h: number; name: string; left: number; ins: [string, number][]; outs: [string, number][] };
function GhNode({ x, y, w, h, name, left, ins, outs }: NodeProps) {
  return (
    <Component $x={x} $y={y} $w={w} $h={h}>
      <Ports $w={left}>{ins.map(([t, tw]) => <Port key={t} $side="l"><Fit text={t} w={tw} size={19} font={UI} color="#111" /></Port>)}</Ports>
      {name && <Spine><SpineText>{name}</SpineText></Spine>}
      {name && <Ports $w={w - left - 34}>{outs.map(([t, tw]) => <Port key={t} $side="r"><Fit text={t} w={tw} size={19} font={UI} color="#111" /></Port>)}</Ports>}
    </Component>
  );
}

const arrowUp = <svg width="15" height="15"><path d="M7.5 13V3M3 7L7.5 2.5L12 7" fill="none" stroke="#888" strokeWidth="2.4" /></svg>;
const arrowDown = <svg width="15" height="15"><path d="M7.5 2V12M3 8L7.5 12.5L12 8" fill="none" stroke="#555" strokeWidth="2.4" /></svg>;
const fork = <svg width="15" height="15"><path d="M3 2L7.5 7L12 2M7.5 7V13" fill="none" stroke="#888" strokeWidth="2.2" /></svg>;

function GhParam({ x, y, w, text, tw, green, badges }: { x: number; y: number; w: number; text: string; tw: number; green?: boolean; badges: React.ReactNode[] }) {
  return (
    <Param $x={x} $y={y} $w={w} $h={27} $green={green}>
      {badges.map((b, i) => <Badge key={i}>{b}</Badge>)}
      <Fit text={text} w={tw} size={19} font={UI} color="#111" />
      <Nub $side="l" /><Nub $side="r" />
    </Param>
  );
}

const Compass = styled.div`
  ${place}
`;
const Marker = styled.div`
  ${place}
  border: 1px solid #111;
  background: linear-gradient(#222, #aaa 40%, #333);
`;

function GrasshopperWindow() {
  return (
    <Gh>
      <GhTitle>
        <Fit text="Grasshopper - 170330_Sim0_Vorticity_joinmesh_9*" w={400} size={16.5} font={UI} />
        <svg width="246" height="44">
          <path d="M1 16H11M4 12.5L.8 16L4 19.5ZM8 12.5L11.2 16L8 19.5Z" stroke="#111" fill="#111" strokeWidth="1.4" />
          <path d="M91 22.5H106M160.5 14.5H175.5V29.5H160.5ZM231 15L246 30M246 15L231 30" stroke="#000" fill="none" strokeWidth="1.2" />
        </svg>
      </GhTitle>
      <GhMenu>
        <MenuGroup>{ghMenu.map(([t, w]) => <Fit key={t} text={t} w={w} size={16} />)}</MenuGroup>
        <Fit text="170330_Sim0_Vorticity_joinmesh_9" w={265} size={16} />
      </GhMenu>
      <GhTabs>
        <ActiveTab><Fit text="Params" w={54} size={16} /></ActiveTab>
        {ghTabs.map(([t, w]) => <Fit key={t} text={t} w={w} size={16} color="#6e6e6e" />)}
      </GhTabs>
      <Ribbon>
        <RibbonGroup name="Geometry" w={192} tw={45} cols={geometry} />
        <RibbonGroup name="Primitive" w={61} tw={38} cols={primitive} />
        <RibbonGroup name="Input" w={137} tw={24} cols={inputs} />
        <RibbonGroup name="Util" w={109} tw={15} cols={util} />
      </Ribbon>
      <GhTools>
        <Tools>
          <Slot $w={27}><Glyph size={25}>{toolGlyph.open}</Glyph></Slot>
          <Slot $w={35}><Glyph size={25}>{toolGlyph.save}</Glyph></Slot>
          <Sep $l={2} $r={3} />
          <Combo>
            <Fit text="125%" w={48} size={19} font={UI} color="#111" />
            <svg width="12" height="8"><path d="M1 1L6 6L11 1" fill="none" stroke="#555" strokeWidth="1.3" /></svg>
          </Combo>
          <Slot $w={28}><Glyph size={24}>{toolGlyph.frame}</Glyph></Slot>
          <Drop />
          <Slot $w={34}><Glyph size={26}>{toolGlyph.eye}</Glyph></Slot>
          <Drop />
          <Slot $w={28}><Glyph size={25}>{toolGlyph.pen}</Glyph></Slot>
        </Tools>
        <Tools>
          <Slot $w={30}><Glyph size={24}>{toolGlyph.shadow}</Glyph></Slot>
          <Slot $w={30}><Glyph size={24}>{toolGlyph.wire}</Glyph></Slot>
          <Slot $w={28} $on><Glyph size={24}>{toolGlyph.redTube}</Glyph></Slot>
          <Sep $l={7} $r={7} />
          <Slot $w={28}><Glyph size={24}>{toolGlyph.greenTube}</Glyph></Slot>
          <Slot $w={28}><Glyph size={24}>{toolGlyph.halfBall}</Glyph></Slot>
          <Sep $l={3} $r={2} />
          <Slot $w={28}><Glyph size={24}>{toolGlyph.ball}</Glyph></Slot>
          <Drop />
        </Tools>
      </GhTools>
      <Canvas>
        <GridLines />
        <GroupArea $x={1273} $y={415} $w={225} $h={483} />
        <Wires />
        <Scribble $x={964} $y={259} $w={200} $h={34}><Fit text="Sort Meshes" w={186} size={31.5} /></Scribble>
        <Scribble $x={1818} $y={277} $w={90} $h={34}><Fit text="Move" w={81} size={31.5} /></Scribble>
        <YellowPanel $x={885} $y={348} $w={299} $h={182}>
          {panelLines.map((t, i) => (
            <PanelRow key={i} $dark={i % 2 === 1}>
              <Fit text={String(i)} size={18} font={UI} color="#333" />
              <Fit text={t} w={t.length * 12.25} size={20} font={MONO} color="#3a3a30" />
            </PanelRow>
          ))}
          <Nub $side="l" /><Nub $side="r" />
        </YellowPanel>
        <GhNode x={935} y={549} w={219} h={156} name="Python" left={86}
          ins={[["pi", 17], ["meshes", 69], ["toler", 42]]}
          outs={[["out", 30], ["planes", 58], ["direction", 80], ["cut", 28], ["stitch", 48], ["virgin", 50]]} />
        <Pointer $x={1038} $y={701} $w={14} $h={8} />
        <TimeTag $x={978} $y={707} $w={134} $h={28}><Fit text="399ms (8%)" w={121} size={19.5} font={MONO} color="#2a2a2a" /></TimeTag>
        <GhParam x={1314} y={428} w={150} text="Mesh - Cut" tw={100} badges={[arrowUp]} />
        <GhParam x={1298} y={568} w={171} text="Mesh - Stitch" tw={119} badges={[arrowUp]} />
        <GhNode x={1284} y={658} w={224} h={107} name="Python" left={97}
          ins={[["direction", 80], ["two_pi", 59]]} outs={[["v_out", 49], ["sort_vec", 74]]} />
        <GhParam x={1285} y={859} w={201} text="Mesh - Virgin" tw={122} green badges={[arrowDown, fork]} />
        <GhNode x={1761} y={367} w={94} h={66} name="Rev" left={29} ins={[["V", 12]]} outs={[["V", 12]]} />
        <GhNode x={1886} y={334} w={60} h={90} name="" left={32} ins={[["G", 14], ["T", 11]]} outs={[]} />
        <TimeTag $x={1883} $y={426} $w={50} $h={28}><Fit text="36" w={24} size={19.5} font={MONO} color="#2a2a2a" /></TimeTag>
        <Marker $x={852} $y={1084} $w={8} $h={27} />
        <Compass $x={1847} $y={1056} $w={60} $h={50}>
          <svg width="60" height="50" viewBox="1846 1056 60 50">
            <path d="M1858 1083A20 20 0 0 1 1866 1065M1874 1062A22 22 0 0 1 1899 1085" fill="none" stroke="#000" strokeWidth="4.5" />
            <path d="M1847 1074L1853 1071L1858 1074L1854 1078Z" fill="#000" />
            <circle cx="1877" cy="1083" r="19.5" fill="url(#dial)" stroke="#333" strokeWidth="1.2" />
            <circle cx="1877" cy="1083" r="18" fill="none" stroke="#fff" strokeWidth="2.2" />
            <path d="M1880 1064L1886 1067L1881 1071ZM1896 1085L1894 1092L1889 1087ZM1875 1102L1869 1100L1873 1095ZM1858 1081L1860 1075L1865 1079Z" fill="#fff" />
          </svg>
        </Compass>
      </Canvas>
      <GhStatus>
        <Fit text="..." w={11} size={15} />
        <Tools>
          <Fit text="0.9.0076" w={63} size={16} color="#777" />
          <svg width="21" height="20"><path d="M18 8h2v2h-2zM14 12h2v2h-2zM18 12h2v2h-2zM10 16h2v2h-2zM14 16h2v2h-2zM18 16h2v2h-2z" fill="#999" /></svg>
        </Tools>
      </GhStatus>
    </Gh>
  );
}

/* ---------- sliver of the Rhino window on the right ---------- */

const Sliver = styled.div`
  flex: 1;
  display: flex;
  flex-direction: column;
  background: #d3d6e0;
`;
const Strip = styled.div<{ $h: number; $bg?: string }>`
  height: ${(q) => q.$h}px;
  flex: none;
  background: ${(q) => q.$bg || "transparent"};
  border-bottom: 1px solid #a5adc2;
`;

/* ---------- taskbar ---------- */

const Taskbar = styled.div`
  height: 60px;
  display: flex;
  justify-content: space-between;
  background: #000;
`;
const Apps = styled.div`
  display: flex;
`;
const TaskButton = styled.div<{ $w: number; $gap?: number; $open?: boolean; $active?: boolean }>`
  width: ${(q) => q.$w}px;
  margin-left: ${(q) => q.$gap || 0}px;
  display: flex;
  flex-direction: column;
  align-items: center;
  justify-content: space-between;
  background: ${(q) => (q.$active ? "#333" : "transparent")};
  &::before { content: ""; height: 3px; }
  &::after {
    content: "";
    width: ${(q) => (q.$active ? "100%" : "61px")};
    height: 3px;
    background: ${(q) => (q.$open ? "#b4b4b4" : "transparent")};
  }
`;
const Tray = styled.div`
  display: flex;
  align-items: center;
  padding-right: 6px;
`;
const TrayCell = styled.div<{ $w: number }>`
  width: ${(q) => q.$w}px;
  display: flex;
  justify-content: center;
`;
const Clock = styled.div`
  width: 105px;
  display: flex;
  flex-direction: column;
  align-items: center;
  gap: 12px;
  margin-right: 18px;
`;
const ShowDesktop = styled.div`
  width: 1px;
  height: 60px;
  margin-left: 19px;
  background: #555;
`;

const taskIcons: [React.ReactNode, number, boolean?, boolean?][] = [
  [<svg width="24" height="24"><path d="M0 3.5L10 2V11.5H0ZM11.2 1.8L24 0V11.5H11.2ZM0 12.7H10V22L0 20.6ZM11.2 12.7H24V24L11.2 22.2Z" fill="#fff" /></svg>, 72],
  [<svg width="31" height="21"><path d="M7 1H24V20H7ZM4 4H1V17H4M27 4H30V17H27" fill="none" stroke="#fff" strokeWidth="1.4" /></svg>, 71],
  [<svg width="34" height="28"><path d="M1 5V1H11L13 4H32V12H1Z" fill="#e8b93c" /><path d="M1 7H33V27H1Z" fill="#ffe18c" /><path d="M6 28V17Q6 14 9 14H25Q28 14 28 17V28H22V20H12V28Z" fill="#3cb4e8" /></svg>, 74, true],
  [<svg width="36" height="36"><rect width="36" height="36" fill="#0a78d8" rx="1" /><circle cx="18" cy="18" r="15" fill="#fff" /><path d="M4 18L12 11.5V15.8H24V11.5L32 18L24 24.5V20.2H12V24.5Z" fill="#0a6ccc" /></svg>, 75, true],
  [<svg width="34" height="30"><path d="M3 0H31L34 22V30H0V22Z" fill="#6c6c6c" /><path d="M3 0H31L34 23H0Z" fill="#4a4a4a" stroke="#999" /><path d="M1 25H33V29H1Z" fill="#ddd" /><path d="M22 6C18 4 12 5 13 9C14 12 22 10 21 14C20 17 15 17 12 15" fill="none" stroke="#f59a1c" strokeWidth="3" /></svg>, 75, true],
  [<svg width="34" height="34"><circle cx="17" cy="17" r="15" fill="#1c56b0" /><path d="M17 3Q9 5 8 12Q12 10 15 13Q19 15 15 18Q20 23 25 18Q30 10 24 4Q33 8 33 18Q31 32 17 33Q3 32 1 18Q1 10 5 6Q5 9 7 10Q9 4 17 3Z" fill="#f07818" /><path d="M30 9Q34 16 31 24Q26 32 17 32Q27 28 30 9Z" fill="#ffc83c" /></svg>, 75, true],
  [<RhinoHead size={36} />, 74, true, true],
  [<svg width="33" height="28"><rect x=".5" y=".5" width="32" height="27" fill="#111" stroke="#bbb" /><rect x="1" y="1" width="31" height="3" fill="#c8d0dc" /><text x="3" y="12" fontFamily={MONO} fontSize="7" fill="#fff">C:\_</text></svg>, 76, true],
  [<svg width="32" height="32"><path d="M17 3H31V29H17Z" fill="#fff" stroke="#2a5699" /><path d="M20 8H29M20 12H29M20 16H29M20 20H29M20 24H29" stroke="#2a5699" strokeWidth="1.6" /><path d="M0 3L20 0V32L0 29Z" fill="#2a5699" /><text x="3" y="21.5" fontFamily={SANS} fontWeight="700" fontSize="14" fill="#fff">W</text></svg>, 75, true],
  [<svg width="33" height="33"><rect x="1" y="1" width="31" height="31" fill="#000" stroke="#fff" strokeWidth="1.5" /><path d="M2 27L13 10L20 20L24 15L31 25V27Z" fill="#fff" /><path d="M13 10L26 27" stroke="#000" /></svg>, 80, true],
];

function TaskbarView() {
  return (
    <Taskbar>
      <Apps>
        {taskIcons.map(([g, w, open, active], i) => (
          <TaskButton key={i} $w={w} $open={open} $active={active} $gap={i === 2 || i === 6 ? (i === 2 ? 5 : 1) : 0}>{g}</TaskButton>
        ))}
      </Apps>
      <Tray>
        <TrayCell $w={34}><svg width="20" height="12"><path d="M1 11L10 1.5L19 11" fill="none" stroke="#fff" strokeWidth="1.5" /></svg></TrayCell>
        <TrayCell $w={38}>
          <svg width="25" height="26"><path d="M6 1L12 5L7 9L1 5ZM18 1L23 5L18 9L12 5ZM7 9L12 13L6 17L1 13ZM18 9L23 13L18 17L12 13ZM6 19L12 15L16 19L12 22Z" fill="#fff" /><circle cx="18" cy="18.5" r="6.8" fill="#2fae3c" /><path d="M14.5 18.5L17 21L21.5 16" fill="none" stroke="#fff" strokeWidth="1.8" /></svg>
        </TrayCell>
        <TrayCell $w={36}><svg width="24" height="13"><path d="M1 1H21V12H1ZM21.5 4H23V9H21.5" fill="none" stroke="#fff" strokeWidth="1.4" /><path d="M3 3H10V10H3Z" fill="#fff" /></svg></TrayCell>
        <TrayCell $w={36}><svg width="20" height="20"><path d="M1 19A18 18 0 0 1 19 1M6 19A13 13 0 0 1 19 6M11 19A8 8 0 0 1 19 11" fill="none" stroke="#ddd" strokeWidth="1.4" /><circle cx="17.5" cy="17.5" r="1.6" fill="#fff" /></svg></TrayCell>
        <TrayCell $w={34}><svg width="22" height="20"><path d="M1 6.5H4.5L9 1.5V18.5L4.5 13.5H1ZM13 6L20 14M20 6L13 14" fill="none" stroke="#fff" strokeWidth="1.4" /></svg></TrayCell>
        <Clock>
          <Fit text="12:13 PM" w={74} size={16} font={UI} color="#fff" />
          <Fit text="4/27/2017" w={84} size={16} font={UI} color="#fff" />
        </Clock>
        <svg width="37" height="38" viewBox="0 0 37 38">
          <path d="M1 3H25V22H16L10 27V22H1Z" fill="#fff" /><path d="M6 8H20M6 12.5H20M6 17H20" stroke="#000" strokeWidth="1.4" />
          <circle cx="24.5" cy="26" r="11.5" fill="#222" stroke="#999" /><text x="24.5" y="32" fontFamily={UI} fontWeight="700" fontSize="16" fill="#fff" textAnchor="middle">1</text>
        </svg>
        <ShowDesktop />
      </Tray>
    </Taskbar>
  );
}

export default function App() {
  return (
    <Screen>
      <GlobalStyle />
      <Gradients />
      <Desktop>
        <RhinoWindow />
        <GrasshopperWindow />
        <Sliver>
          <Strip $h={64} $bg="#f2f2f4" />
          <Strip $h={51} $bg="#e4e4e6" />
          <Strip $h={13} $bg="#f0f0f0" />
          <Strip $h={16} />
          <Strip $h={37} />
          <Strip $h={28} />
          <Strip $h={65} />
          <Strip $h={800} $bg="#e8e8ea" />
          <Strip $h={42} />
        </Sliver>
      </Desktop>
      <TaskbarView />
    </Screen>
  );
}
